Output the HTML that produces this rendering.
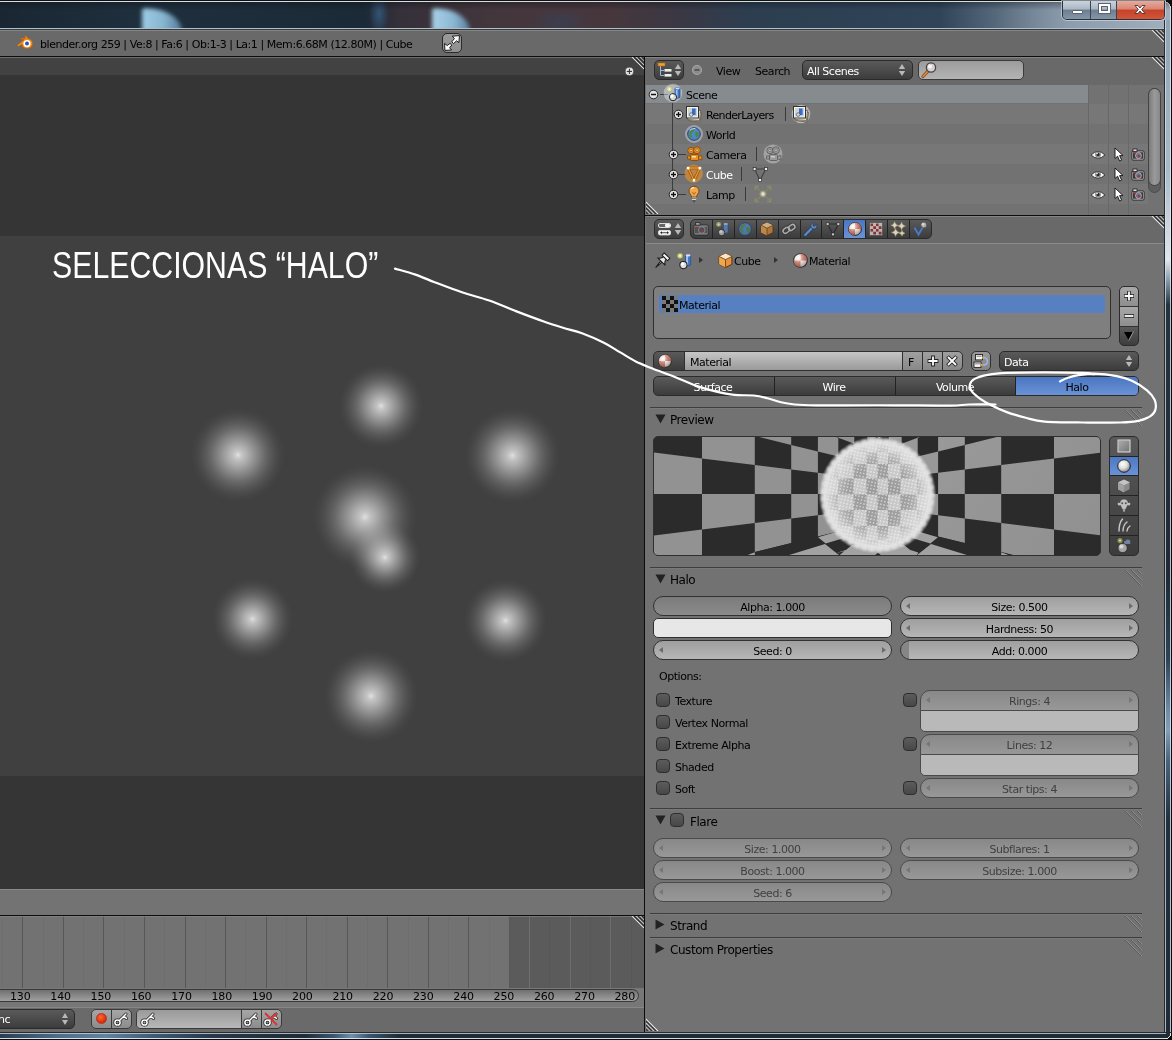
<!DOCTYPE html><html><head><meta charset="utf-8"><title>Blender</title><style>
*{margin:0;padding:0;box-sizing:border-box}
html,body{width:1172px;height:1040px;overflow:hidden;background:#727272}
body{position:relative;font-family:"DejaVu Sans","Liberation Sans",sans-serif;font-size:11px;color:#000;line-height:13px;letter-spacing:-0.45px}
.a{position:absolute}
.t{position:absolute;white-space:nowrap;line-height:13px;height:13px}
.w{color:#fff}
.hd{position:absolute;background:#6b6b6b}
.grip{position:absolute;width:13px;height:13px;overflow:hidden}
.btn{position:absolute;border:1px solid #2b2b2b;border-radius:4px}
.dark{background:linear-gradient(#5a5a5a,#3c3c3c)}
.num{position:absolute;border:1px solid #323232;border-radius:10px;background:linear-gradient(#9f9f9f,#b6b6b6);height:20px;text-align:center;line-height:21px;white-space:nowrap;overflow:hidden}
.num.dis{background:linear-gradient(#888,#989898);color:#404040;border-color:#4a4a4a}
.cb{position:absolute;width:14px;height:14px;border:1px solid #2e2e2e;border-radius:4px;background:linear-gradient(#5c5c5c,#474747)}
.sep{position:absolute;height:1px;background:#3e3e3e;left:650px;width:492px}
.sep2{position:absolute;height:1px;background:#808080;left:650px;width:492px}
.ar{position:absolute;width:0;height:0;border:3px solid transparent}
</style></head><body><div id="root" style="position:absolute;left:0;top:0;width:1172px;height:1040px;will-change:transform"><div class="a" style="left:0;top:0;width:1172px;height:29px;overflow:hidden;background:
radial-gradient(ellipse 10px 22px at 379px 14px,rgba(52,88,124,.9) 0,rgba(52,88,124,0) 100%),
radial-gradient(ellipse 30px 14px at 560px 22px,rgba(50,70,100,.5) 0,rgba(50,70,100,0) 100%),
linear-gradient(90deg,#1a2733 0,#1f2f3d 12%,#1b2a37 31%,#35303a 34%,#43363c 42%,#47373c 52%,#3a3844 58%,#2c3e50 64%,#31465a 85%,#55697d 92%,#3a4d61 100%)">
<div class="a" style="left:142px;top:8px;width:40px;height:24px;background:linear-gradient(90deg,#9fcde6 0,#86b3ce 55%,#54799a 100%);border-radius:3px 38px 0 0/3px 24px 0 0;filter:blur(2.2px)"></div>
<div class="a" style="left:432px;top:8px;width:38px;height:24px;background:linear-gradient(90deg,#a8d2e8 0,#8db8d2 55%,#5a7f9e 100%);border-radius:3px 36px 0 0/3px 24px 0 0;filter:blur(2.2px)"></div>
</div><div class="a" style="left:940px;top:2px;width:232px;height:26px;background:linear-gradient(90deg,rgba(150,166,182,0),rgba(146,162,178,.55) 35%,rgba(150,166,182,.85) 55%,rgba(168,180,193,.95))"></div><div class="a" style="left:0;top:0;width:1172px;height:1px;background:#111"></div><div class="a" style="left:1164px;top:0;width:8px;height:8px;background:radial-gradient(circle at 0 100%,rgba(0,0,0,0) 0,rgba(0,0,0,0) 5.6px,#dfe6ec 5.8px,#dfe6ec 6.6px,#0d0d0d 6.9px)"></div><div class="a" style="left:0;top:1px;width:1165px;height:1px;background:#d8dde2"></div><div class="a" style="left:0;top:2px;width:1172px;height:8px;background:linear-gradient(rgba(10,15,20,.35),rgba(10,15,20,0))"></div><div class="a" style="left:0;top:28px;width:1165px;height:1px;background:#aebfce"></div><div class="a" style="left:1164px;top:20px;width:8px;height:1020px;background:linear-gradient(#8fa3b6 0,#a9b9c8 150px,#dfe6ec 240px,#8194a8 262px,#26343f 285px,#1f2c38 560px,#2d4458 640px,#6d8ca8 690px,#7f9fba 710px,#4a6580 740px,#223040 800px,#1f2c38 100%)"></div><div class="a" style="left:1164px;top:20px;width:1px;height:1012px;background:#2b2b2b"></div><div class="a" style="left:1165px;top:20px;width:1px;height:1013px;background:rgba(215,225,235,.75)"></div><div class="a" style="left:1170px;top:6px;width:1px;height:1028px;background:rgba(225,232,240,.8)"></div><div class="a" style="left:1171px;top:6px;width:1px;height:1034px;background:#0d0d0d"></div><div class="a" style="left:0;top:1032px;width:1172px;height:8px;background:linear-gradient(90deg,#2a3d50 0,#4d6d8a 5%,#5f83a2 9%,#3f5b75 13%,#26384a 18%,#1f2c38 26%,#3a566f 28.5%,#6f90ad 30%,#3a566f 31.5%,#1f2c38 34%,#1f2c38 100%)"></div><div class="a" style="left:0;top:1032px;width:1165px;height:1px;background:#2b2b2b"></div><div class="a" style="left:0;top:1033px;width:1166px;height:1px;background:rgba(190,203,216,.85)"></div><div class="a" style="left:0;top:1038px;width:1169px;height:1px;background:rgba(232,238,244,.9)"></div><div class="a" style="left:0;top:1039px;width:1172px;height:1px;background:#0d0d0d"></div><div class="a" style="left:1165px;top:1033px;width:7px;height:7px;background:radial-gradient(circle at 0 0,rgba(0,0,0,0) 0,rgba(0,0,0,0) 5.2px,#e4eaf0 5.3px,#e4eaf0 6.1px,#0d0d0d 6.3px)"></div><div class="a" style="left:1062px;top:1px;width:103px;height:19px;border:1px solid #2a3138;border-top:none;border-radius:0 0 5px 5px;overflow:hidden;box-shadow:0 0 0 1px rgba(220,230,240,.55)">
<div class="a" style="left:0;top:0;width:28px;height:18px;background:linear-gradient(#c9d3dc 0,#aab7c4 45%,#6d7e90 50%,#8496a8 100%);border-right:1px solid #3a4450"></div>
<div class="a" style="left:28px;top:0;width:26px;height:18px;background:linear-gradient(#c9d3dc 0,#aab7c4 45%,#6d7e90 50%,#8496a8 100%);border-right:1px solid #3a4450"></div>
<div class="a" style="left:54px;top:0;width:48px;height:18px;background:linear-gradient(#e7aa9c 0,#d88572 45%,#c4432a 50%,#d4553a 100%)"></div>
<div class="a" style="left:9px;top:9px;width:11px;height:4px;background:#fff;border:1px solid #5a6470;border-radius:1px"></div>
<div class="a" style="left:36px;top:3px;width:11px;height:9px;border:2px solid #fff;outline:1px solid #5a6470;background:transparent"><div style="position:absolute;left:0;top:0;right:0;bottom:0;border:1px solid #5a6470"></div></div>
<svg class="a" style="left:70px;top:2px" width="14" height="13" viewBox="0 0 14 13"><path d="M2 2.5L5 2.5L7 5L9 2.5L12 2.5L8.7 6.5L12 10.5L9 10.5L7 8L5 10.5L2 10.5L5.3 6.5Z" fill="#fff" stroke="#5a3a3a" stroke-width="1"/></svg>
</div><div class="a" style="left:0;top:29px;width:1164px;height:27px;background:#696969;border-top:1px solid #3a3a3a"></div><div class="a" style="left:0;top:30px;width:1164px;height:1px;background:#858585"></div><div class="a" style="left:0;top:56px;width:1164px;height:1px;background:#0c0c0c"></div><svg class="a" style="left:16px;top:35px" width="18" height="15" viewBox="0 0 18 15">
<path d="M1.2 10.2L8.2 4.6L5 4.6L5 3.2L9.6 3.2L8.4 1.6L9.6 0.8L12.4 3.6C15.4 4.4 17 6.6 16.6 9.2C16.2 12 13.6 13.8 10.6 13.6C8 13.4 6 11.8 5.8 9.6L2.4 11.6Z" fill="#f08a1c" stroke="#b85c00" stroke-width=".6"/>
<circle cx="11" cy="8.6" r="3.6" fill="#fff"/><circle cx="11" cy="8.6" r="2" fill="#2f55b0"/></svg><div class="t " style="left:40px;top:38px;letter-spacing:-0.45px;">blender.org 259 | Ve:8 | Fa:6 | Ob:1-3 | La:1 | Mem:6.68M (12.80M) | Cube</div><div class="btn" style="left:442px;top:33px;width:20px;height:20px;background:linear-gradient(#9a9a9a,#909090);border-color:#2a2a2a;border-radius:5px"></div>
<svg class="a" style="left:442px;top:33px" width="20" height="20" viewBox="0 0 20 20"><g fill="#fff" stroke="#1c1c1c" stroke-width="1" stroke-linejoin="round"><path d="M10.2 3.2L17.4 2.6L16.9 9.6L14.6 7.8L11.6 10.6L9.8 8.8L12.4 5.6Z"/><path d="M2.6 10.4L2.9 17.4L9.6 17L7.6 14.8L9.8 12L8 10.4L5.2 12.6Z"/></g></svg><svg class="a" style="left:1151px;top:30px;" width="13" height="13" viewBox="0 0 13 13"><g stroke-width="1.05"><path d="M1 0L13 12" stroke="#ededed"/><path d="M5 0L13 8" stroke="#d8d8d8" opacity=".9"/><path d="M9 0L13 4" stroke="#c8c8c8" opacity=".8"/><path d="M3 0L13 10M7 0L13 6M11 0L13 2" stroke="#2c2c2c"/></g></svg><div class="a" style="left:0;top:57px;width:644px;height:832px;background:#353535"></div><div class="a" style="left:0;top:57px;width:644px;height:1px;background:#6e6e6e"></div><div class="a" style="left:0;top:58px;width:644px;height:17px;background:#424242"></div><div class="a" style="left:0;top:236px;width:644px;height:540px;background:#404040"></div><svg class="a" style="left:631px;top:57px;" width="13" height="13" viewBox="0 0 13 13"><g stroke-width="1.05"><path d="M1 0L13 12" stroke="#ededed"/><path d="M5 0L13 8" stroke="#d8d8d8" opacity=".9"/><path d="M9 0L13 4" stroke="#c8c8c8" opacity=".8"/><path d="M3 0L13 10M7 0L13 6M11 0L13 2" stroke="#2c2c2c"/></g></svg><svg class="a" style="left:624px;top:66px" width="11" height="11" viewBox="0 0 11 11"><circle cx="5.4" cy="5.4" r="4.1" fill="#e4e4e4" stroke="#3a3a3a" stroke-width=".5"/><path d="M5.4 2.8V8M2.8 5.4H8" stroke="#2a2a2a" stroke-width="1"/></svg><div class="a" style="left:339.2px;top:363.5px;width:84.3px;height:84.3px;border-radius:50%;background:radial-gradient(circle closest-side,rgba(255,255,255,.86) 0,rgba(255,255,255,.78) 3%,rgba(255,255,255,.68) 10%,rgba(255,255,255,.56) 22%,rgba(255,255,255,.44) 34%,rgba(255,255,255,.335) 45%,rgba(255,255,255,.22) 57%,rgba(255,255,255,.136) 68%,rgba(255,255,255,.065) 80%,rgba(255,255,255,.022) 90%,rgba(255,255,255,0) 100%)"></div><div class="a" style="left:190.7px;top:407.5px;width:94.2px;height:94.2px;border-radius:50%;background:radial-gradient(circle closest-side,rgba(255,255,255,.86) 0,rgba(255,255,255,.78) 3%,rgba(255,255,255,.68) 10%,rgba(255,255,255,.56) 22%,rgba(255,255,255,.44) 34%,rgba(255,255,255,.335) 45%,rgba(255,255,255,.22) 57%,rgba(255,255,255,.136) 68%,rgba(255,255,255,.065) 80%,rgba(255,255,255,.022) 90%,rgba(255,255,255,0) 100%)"></div><div class="a" style="left:465.4px;top:408.4px;width:94.2px;height:94.2px;border-radius:50%;background:radial-gradient(circle closest-side,rgba(255,255,255,.86) 0,rgba(255,255,255,.78) 3%,rgba(255,255,255,.68) 10%,rgba(255,255,255,.56) 22%,rgba(255,255,255,.44) 34%,rgba(255,255,255,.335) 45%,rgba(255,255,255,.22) 57%,rgba(255,255,255,.136) 68%,rgba(255,255,255,.065) 80%,rgba(255,255,255,.022) 90%,rgba(255,255,255,0) 100%)"></div><div class="a" style="left:312.9px;top:465.2px;width:104.2px;height:104.2px;border-radius:50%;background:radial-gradient(circle closest-side,rgba(255,255,255,.86) 0,rgba(255,255,255,.78) 3%,rgba(255,255,255,.68) 10%,rgba(255,255,255,.56) 22%,rgba(255,255,255,.44) 34%,rgba(255,255,255,.335) 45%,rgba(255,255,255,.22) 57%,rgba(255,255,255,.136) 68%,rgba(255,255,255,.065) 80%,rgba(255,255,255,.022) 90%,rgba(255,255,255,0) 100%)"></div><div class="a" style="left:348.9px;top:521.6px;width:71.9px;height:71.9px;border-radius:50%;background:radial-gradient(circle closest-side,rgba(255,255,255,.86) 0,rgba(255,255,255,.78) 3%,rgba(255,255,255,.68) 10%,rgba(255,255,255,.56) 22%,rgba(255,255,255,.44) 34%,rgba(255,255,255,.335) 45%,rgba(255,255,255,.22) 57%,rgba(255,255,255,.136) 68%,rgba(255,255,255,.065) 80%,rgba(255,255,255,.022) 90%,rgba(255,255,255,0) 100%)"></div><div class="a" style="left:211.6px;top:578.1px;width:81.8px;height:81.8px;border-radius:50%;background:radial-gradient(circle closest-side,rgba(255,255,255,.86) 0,rgba(255,255,255,.78) 3%,rgba(255,255,255,.68) 10%,rgba(255,255,255,.56) 22%,rgba(255,255,255,.44) 34%,rgba(255,255,255,.335) 45%,rgba(255,255,255,.22) 57%,rgba(255,255,255,.136) 68%,rgba(255,255,255,.065) 80%,rgba(255,255,255,.022) 90%,rgba(255,255,255,0) 100%)"></div><div class="a" style="left:464.0px;top:578.8px;width:83.1px;height:83.1px;border-radius:50%;background:radial-gradient(circle closest-side,rgba(255,255,255,.86) 0,rgba(255,255,255,.78) 3%,rgba(255,255,255,.68) 10%,rgba(255,255,255,.56) 22%,rgba(255,255,255,.44) 34%,rgba(255,255,255,.335) 45%,rgba(255,255,255,.22) 57%,rgba(255,255,255,.136) 68%,rgba(255,255,255,.065) 80%,rgba(255,255,255,.022) 90%,rgba(255,255,255,0) 100%)"></div><div class="a" style="left:323.9px;top:649.3px;width:94.2px;height:94.2px;border-radius:50%;background:radial-gradient(circle closest-side,rgba(255,255,255,.86) 0,rgba(255,255,255,.78) 3%,rgba(255,255,255,.68) 10%,rgba(255,255,255,.56) 22%,rgba(255,255,255,.44) 34%,rgba(255,255,255,.335) 45%,rgba(255,255,255,.22) 57%,rgba(255,255,255,.136) 68%,rgba(255,255,255,.065) 80%,rgba(255,255,255,.022) 90%,rgba(255,255,255,0) 100%)"></div><div class="a" id="sel" style="left:51.7px;top:241.1px;font-family:'Liberation Sans',sans-serif;font-size:36.3px;line-height:50px;color:#fff;white-space:nowrap;letter-spacing:0;transform-origin:0 0;transform:scaleX(.834)">SELECCIONAS “HALO”</div><div class="a" style="left:0;top:889px;width:644px;height:27px;background:#737373"></div><div class="a" style="left:0;top:889px;width:644px;height:1px;background:#8a8a8a"></div><div class="a" style="left:0;top:915px;width:644px;height:1px;background:#0c0c0c"></div><div class="a" style="left:0;top:916px;width:644px;height:73px;background:#727272;overflow:hidden" id="tl"><div class="a" style="left:509px;top:0;width:135px;height:73px;background:#5b5b5b"></div><div class="a" style="left:22.3px;top:0;width:1px;height:73px;background:#575757"></div><div class="a" style="left:2.0px;top:0;width:1px;height:73px;background:#6e6e6e"></div><div class="a" style="left:62.8px;top:0;width:1px;height:73px;background:#575757"></div><div class="a" style="left:42.6px;top:0;width:1px;height:73px;background:#6e6e6e"></div><div class="a" style="left:103.4px;top:0;width:1px;height:73px;background:#575757"></div><div class="a" style="left:83.1px;top:0;width:1px;height:73px;background:#6e6e6e"></div><div class="a" style="left:143.9px;top:0;width:1px;height:73px;background:#575757"></div><div class="a" style="left:123.7px;top:0;width:1px;height:73px;background:#6e6e6e"></div><div class="a" style="left:184.5px;top:0;width:1px;height:73px;background:#575757"></div><div class="a" style="left:164.2px;top:0;width:1px;height:73px;background:#6e6e6e"></div><div class="a" style="left:225.1px;top:0;width:1px;height:73px;background:#575757"></div><div class="a" style="left:204.8px;top:0;width:1px;height:73px;background:#6e6e6e"></div><div class="a" style="left:265.6px;top:0;width:1px;height:73px;background:#575757"></div><div class="a" style="left:245.3px;top:0;width:1px;height:73px;background:#6e6e6e"></div><div class="a" style="left:306.1px;top:0;width:1px;height:73px;background:#575757"></div><div class="a" style="left:285.9px;top:0;width:1px;height:73px;background:#6e6e6e"></div><div class="a" style="left:346.7px;top:0;width:1px;height:73px;background:#575757"></div><div class="a" style="left:326.4px;top:0;width:1px;height:73px;background:#6e6e6e"></div><div class="a" style="left:387.2px;top:0;width:1px;height:73px;background:#575757"></div><div class="a" style="left:367.0px;top:0;width:1px;height:73px;background:#6e6e6e"></div><div class="a" style="left:427.8px;top:0;width:1px;height:73px;background:#575757"></div><div class="a" style="left:407.5px;top:0;width:1px;height:73px;background:#6e6e6e"></div><div class="a" style="left:468.3px;top:0;width:1px;height:73px;background:#575757"></div><div class="a" style="left:448.1px;top:0;width:1px;height:73px;background:#6e6e6e"></div><div class="a" style="left:508.9px;top:0;width:1px;height:73px;background:#575757"></div><div class="a" style="left:488.6px;top:0;width:1px;height:73px;background:#6e6e6e"></div><div class="a" style="left:549.4px;top:0;width:1px;height:73px;background:#575757"></div><div class="a" style="left:529.2px;top:0;width:1px;height:73px;background:#6e6e6e"></div><div class="a" style="left:590.0px;top:0;width:1px;height:73px;background:#575757"></div><div class="a" style="left:569.7px;top:0;width:1px;height:73px;background:#6e6e6e"></div><div class="a" style="left:630.5px;top:0;width:1px;height:73px;background:#575757"></div><div class="a" style="left:610.3px;top:0;width:1px;height:73px;background:#6e6e6e"></div><div class="a" style="left:671.1px;top:0;width:1px;height:73px;background:#575757"></div><div class="a" style="left:650.8px;top:0;width:1px;height:73px;background:#6e6e6e"></div></div><div class="a" style="left:0;top:916px;width:644px;height:1px;background:#8a8a8a;opacity:.6"></div><svg class="a" style="left:631px;top:916px;" width="13" height="13" viewBox="0 0 13 13"><g stroke-width="1.05"><path d="M1 0L13 12" stroke="#ededed"/><path d="M5 0L13 8" stroke="#d8d8d8" opacity=".9"/><path d="M9 0L13 4" stroke="#c8c8c8" opacity=".8"/><path d="M3 0L13 10M7 0L13 6M11 0L13 2" stroke="#2c2c2c"/></g></svg><div class="a" style="left:0;top:988px;width:644px;height:20px;background:#777"></div><div class="a" style="left:-20px;top:989px;width:659px;height:13px;border:1px solid #3a3a3a;border-radius:7px;background:linear-gradient(#707070,#a0a0a0)"></div><div class="t" style="left:5.3px;top:990px;width:30px;text-align:center;font-size:11px;letter-spacing:-.15px">130</div><div class="t" style="left:45.6px;top:990px;width:30px;text-align:center;font-size:11px;letter-spacing:-.15px">140</div><div class="t" style="left:85.9px;top:990px;width:30px;text-align:center;font-size:11px;letter-spacing:-.15px">150</div><div class="t" style="left:126.2px;top:990px;width:30px;text-align:center;font-size:11px;letter-spacing:-.15px">160</div><div class="t" style="left:166.5px;top:990px;width:30px;text-align:center;font-size:11px;letter-spacing:-.15px">170</div><div class="t" style="left:206.8px;top:990px;width:30px;text-align:center;font-size:11px;letter-spacing:-.15px">180</div><div class="t" style="left:247.1px;top:990px;width:30px;text-align:center;font-size:11px;letter-spacing:-.15px">190</div><div class="t" style="left:287.4px;top:990px;width:30px;text-align:center;font-size:11px;letter-spacing:-.15px">200</div><div class="t" style="left:327.7px;top:990px;width:30px;text-align:center;font-size:11px;letter-spacing:-.15px">210</div><div class="t" style="left:368.0px;top:990px;width:30px;text-align:center;font-size:11px;letter-spacing:-.15px">220</div><div class="t" style="left:408.3px;top:990px;width:30px;text-align:center;font-size:11px;letter-spacing:-.15px">230</div><div class="t" style="left:448.6px;top:990px;width:30px;text-align:center;font-size:11px;letter-spacing:-.15px">240</div><div class="t" style="left:488.9px;top:990px;width:30px;text-align:center;font-size:11px;letter-spacing:-.15px">250</div><div class="t" style="left:529.2px;top:990px;width:30px;text-align:center;font-size:11px;letter-spacing:-.15px">260</div><div class="t" style="left:569.5px;top:990px;width:30px;text-align:center;font-size:11px;letter-spacing:-.15px">270</div><div class="t" style="left:609.8px;top:990px;width:30px;text-align:center;font-size:11px;letter-spacing:-.15px">280</div><div class="a" style="left:0;top:1007px;width:644px;height:25px;background:#6a6a6a;border-top:1px solid #878787"></div><div class="btn dark" style="left:-10px;top:1009px;width:85px;height:20px;border-radius:5px"></div><div class="t w" style="left:-2px;top:1013px;letter-spacing:-0.45px;">nc</div><svg class="a" style="left:61px;top:1012px" width="8" height="14" viewBox="0 0 8 14"><path d="M4 1L7 6H1ZM4 13L1 8H7Z" fill="#b8b8b8"/></svg><div class="btn" style="left:91px;top:1009px;width:21px;height:20px;background:linear-gradient(#a6a6a6,#8c8c8c);border-color:#3a3a3a;border-radius:5px 0 0 5px"></div><div class="btn" style="left:111px;top:1009px;width:21px;height:20px;background:linear-gradient(#a6a6a6,#8c8c8c);border-color:#3a3a3a;border-radius:0 5px 5px 0"></div><div class="a" style="left:96px;top:1013px;width:11px;height:11px;border-radius:50%;background:radial-gradient(circle at 40% 35%,#ff6a30,#e02800 70%);border:1px solid #a33"></div><div class="btn" style="left:136px;top:1009px;width:106px;height:20px;background:linear-gradient(#a6a6a6,#8c8c8c);border-color:#3a3a3a;border-radius:5px 0 0 5px"></div><div class="a" style="left:137px;top:1010px;width:104px;height:18px;background:linear-gradient(#9a9a9a,#b8b8b8);border-radius:4px 0 0 4px"></div><div class="btn" style="left:241px;top:1009px;width:21px;height:20px;background:linear-gradient(#a6a6a6,#8c8c8c);border-color:#3a3a3a;border-radius:0"></div><div class="btn" style="left:261px;top:1009px;width:21px;height:20px;background:linear-gradient(#a6a6a6,#8c8c8c);border-color:#3a3a3a;border-radius:0 5px 5px 0"></div><svg class="a" style="left:113px;top:1011px" width="16" height="16" viewBox="0 0 16 16"><g fill="none" stroke="#222" stroke-width="3" stroke-linecap="round"><circle cx="4.5" cy="11.5" r="2.6"/><path d="M6.5 9.5L13 3M11 5L13.5 7.5"/></g><g fill="none" stroke="#fff" stroke-width="1.5" stroke-linecap="round"><circle cx="4.5" cy="11.5" r="2.6"/><path d="M6.5 9.5L13 3M11 5L13.5 7.5"/></g></svg><svg class="a" style="left:140px;top:1011px" width="16" height="16" viewBox="0 0 16 16"><g fill="none" stroke="#222" stroke-width="3" stroke-linecap="round"><circle cx="4.5" cy="11.5" r="2.6"/><path d="M6.5 9.5L13 3M11 5L13.5 7.5"/></g><g fill="none" stroke="#fff" stroke-width="1.5" stroke-linecap="round"><circle cx="4.5" cy="11.5" r="2.6"/><path d="M6.5 9.5L13 3M11 5L13.5 7.5"/></g></svg><svg class="a" style="left:243px;top:1011px" width="16" height="16" viewBox="0 0 16 16"><g fill="none" stroke="#222" stroke-width="3" stroke-linecap="round"><circle cx="4.5" cy="11.5" r="2.6"/><path d="M6.5 9.5L13 3M11 5L13.5 7.5"/></g><g fill="none" stroke="#fff" stroke-width="1.5" stroke-linecap="round"><circle cx="4.5" cy="11.5" r="2.6"/><path d="M6.5 9.5L13 3M11 5L13.5 7.5"/></g></svg><svg class="a" style="left:263px;top:1011px" width="16" height="16" viewBox="0 0 16 16"><g fill="none" stroke="#222" stroke-width="3" stroke-linecap="round"><circle cx="4.5" cy="11.5" r="2.6"/><path d="M6.5 9.5L13 3M11 5L13.5 7.5"/></g><g fill="none" stroke="#fff" stroke-width="1.5" stroke-linecap="round"><circle cx="4.5" cy="11.5" r="2.6"/><path d="M6.5 9.5L13 3M11 5L13.5 7.5"/></g></svg><svg class="a" style="left:263px;top:1011px" width="16" height="16" viewBox="0 0 16 16"><path d="M2 2L14 14M14 2L8 8" stroke="#e03030" stroke-width="1.8" fill="none"/></svg><svg class="a" style="left:646px;top:1018px;transform:scale(-1,-1);" width="13" height="13" viewBox="0 0 13 13"><g stroke-width="1.05"><path d="M1 0L13 12" stroke="#ededed"/><path d="M5 0L13 8" stroke="#d8d8d8" opacity=".9"/><path d="M9 0L13 4" stroke="#c8c8c8" opacity=".8"/><path d="M3 0L13 10M7 0L13 6M11 0L13 2" stroke="#2c2c2c"/></g></svg><div class="a" style="left:644px;top:57px;width:1px;height:975px;background:#0c0c0c"></div><div class="a" style="left:645px;top:57px;width:519px;height:28px;background:#696969;border-top:1px solid #858585"></div><svg class="a" style="left:1151px;top:57px;" width="13" height="13" viewBox="0 0 13 13"><g stroke-width="1.05"><path d="M1 0L13 12" stroke="#ededed"/><path d="M5 0L13 8" stroke="#d8d8d8" opacity=".9"/><path d="M9 0L13 4" stroke="#c8c8c8" opacity=".8"/><path d="M3 0L13 10M7 0L13 6M11 0L13 2" stroke="#2c2c2c"/></g></svg><div class="btn dark" style="left:654px;top:60px;width:30px;height:20px;border-radius:5px"></div><svg class="a" style="left:657px;top:62px" width="16" height="16" viewBox="0 0 16 16"><path d="M3.5 4V13.5H7M3.5 8.5H7" fill="none" stroke="#9db8d8" stroke-width="1"/><rect x="1" y="1" width="7" height="3" fill="#f0a030" stroke="#b06a00" stroke-width=".5"/><rect x="7.5" y="7" width="7" height="2.6" fill="#eee"/><rect x="7.5" y="12" width="7" height="2.6" fill="#eee"/></svg><svg class="a" style="left:674px;top:63px" width="8" height="14" viewBox="0 0 8 14"><path d="M4 1L7.2 6H.8ZM4 13L.8 8H7.2Z" fill="#b8b8b8"/></svg><svg class="a" style="left:691px;top:64px" width="12" height="12" viewBox="0 0 12 12"><circle cx="6" cy="6" r="4.5" fill="#8c8c8c" stroke="#a4a4a4" stroke-width="1.1"/><path d="M3.5 6H8.5" stroke="#484848" stroke-width="1.5"/></svg><div class="t " style="left:716px;top:65px;letter-spacing:-0.45px;">View</div><div class="t " style="left:755px;top:65px;letter-spacing:-0.45px;">Search</div><div class="btn dark" style="left:802px;top:60px;width:111px;height:20px;border-radius:5px"></div><div class="t w" style="left:807px;top:65px;letter-spacing:-0.45px;">All Scenes</div><svg class="a" style="left:898px;top:63px" width="8" height="14" viewBox="0 0 8 14"><path d="M4 1L7.2 6H.8ZM4 13L.8 8H7.2Z" fill="#b8b8b8"/></svg><div class="btn" style="left:918px;top:60px;width:106px;height:20px;border-radius:5px;background:linear-gradient(#9c9c9c,#b4b4b4);border-color:#3a3a3a"></div><svg class="a" style="left:920px;top:61px" width="18" height="18" viewBox="0 0 18 18"><path d="M3 15.5L8 10" stroke="#8a4a18" stroke-width="3.2" stroke-linecap="round"/><path d="M3 15.5L8 10" stroke="#e08a40" stroke-width="1.6" stroke-linecap="round"/><circle cx="11" cy="6.5" r="4.6" fill="#d8d0d4" stroke="#444" stroke-width="1.3"/><circle cx="10" cy="5.5" r="2" fill="#fff" opacity=".8"/></svg><div class="a" style="left:646px;top:85px;width:518px;height:130px;background:#727272"></div><div class="a" style="left:646px;top:104px;width:502px;height:20px;background:#777"></div><div class="a" style="left:646px;top:144px;width:502px;height:20px;background:#777"></div><div class="a" style="left:646px;top:184px;width:502px;height:20px;background:#777"></div><div class="a" style="left:646px;top:85px;width:442px;height:18px;background:#868b90"></div><div class="a" style="left:1088px;top:85px;width:1px;height:130px;background:#686868"></div><div class="a" style="left:1108px;top:85px;width:1px;height:130px;background:#686868"></div><div class="a" style="left:1128px;top:85px;width:1px;height:130px;background:#686868"></div><div class="a" style="left:1148px;top:88px;width:13px;height:105px;border-radius:7px;background:#5e5e5e;border:1px solid #4c4c4c"></div><div class="a" style="left:1148px;top:88px;width:13px;height:98px;border-radius:7px;background:linear-gradient(90deg,#7a7a7a,#9a9a9a 50%,#888);border:1px solid #444"></div><div class="a" style="left:645px;top:215px;width:519px;height:1px;background:#0c0c0c"></div><svg class="a" style="left:646px;top:201px;transform:scale(-1,-1);" width="13" height="13" viewBox="0 0 13 13"><g stroke-width="1.05"><path d="M1 0L13 12" stroke="#ededed"/><path d="M5 0L13 8" stroke="#d8d8d8" opacity=".9"/><path d="M9 0L13 4" stroke="#c8c8c8" opacity=".8"/><path d="M3 0L13 10M7 0L13 6M11 0L13 2" stroke="#2c2c2c"/></g></svg><div class="a" style="left:672px;top:103px;width:1px;height:91px;background:#3c3c3c"></div><div class="a" style="left:660px;top:94px;width:8px;height:1px;background:#3c3c3c"></div><div class="a" style="left:672px;top:154px;width:14px;height:1px;background:#3c3c3c"></div><div class="a" style="left:672px;top:174px;width:14px;height:1px;background:#3c3c3c"></div><div class="a" style="left:672px;top:194px;width:14px;height:1px;background:#3c3c3c"></div><svg class="a" style="left:648px;top:89px" width="11" height="11" viewBox="0 0 11 11"><circle cx="5.5" cy="5.5" r="4.3" fill="#e6e6e6" stroke="#222" stroke-width="1"/><path d="M3 5.5H8" stroke="#111" stroke-width="1.5"/></svg><svg class="a" style="left:673px;top:109px" width="11" height="11" viewBox="0 0 11 11"><circle cx="5.5" cy="5.5" r="4.3" fill="#e6e6e6" stroke="#222" stroke-width="1"/><path d="M5.5 3V8M3 5.5H8" stroke="#111" stroke-width="1.3"/></svg><svg class="a" style="left:668px;top:149px" width="11" height="11" viewBox="0 0 11 11"><circle cx="5.5" cy="5.5" r="4.3" fill="#e6e6e6" stroke="#222" stroke-width="1"/><path d="M5.5 3V8M3 5.5H8" stroke="#111" stroke-width="1.3"/></svg><svg class="a" style="left:668px;top:169px" width="11" height="11" viewBox="0 0 11 11"><circle cx="5.5" cy="5.5" r="4.3" fill="#e6e6e6" stroke="#222" stroke-width="1"/><path d="M5.5 3V8M3 5.5H8" stroke="#111" stroke-width="1.3"/></svg><svg class="a" style="left:668px;top:189px" width="11" height="11" viewBox="0 0 11 11"><circle cx="5.5" cy="5.5" r="4.3" fill="#e6e6e6" stroke="#222" stroke-width="1"/><path d="M5.5 3V8M3 5.5H8" stroke="#111" stroke-width="1.3"/></svg><div class="t " style="left:686px;top:89px;letter-spacing:-0.45px;">Scene</div><div class="t " style="left:706px;top:109px;letter-spacing:-0.67px;">RenderLayers</div><div class="t " style="left:706px;top:129px;letter-spacing:-0.45px;">World</div><div class="t " style="left:706px;top:149px;letter-spacing:-0.45px;">Camera</div><div class="t w" style="left:706px;top:169px;letter-spacing:-0.45px;">Cube</div><div class="t " style="left:706px;top:189px;letter-spacing:-0.45px;">Lamp</div><div class="a" style="left:785px;top:107px;width:1px;height:14px;background:#3a3a3a"></div><div class="a" style="left:756px;top:147px;width:1px;height:14px;background:#3a3a3a"></div><div class="a" style="left:741px;top:167px;width:1px;height:14px;background:#3a3a3a"></div><div class="a" style="left:745px;top:187px;width:1px;height:14px;background:#3a3a3a"></div><svg class="a" style="left:663px;top:83px" width="20" height="20" viewBox="0 0 20 20"><circle cx="10" cy="10" r="9.3" fill="#fff" opacity=".38"/>
<circle cx="6.4" cy="6.2" r="2.1" fill="#e8ee70" opacity=".85"/><circle cx="6.4" cy="6.2" r="1" fill="#fffbd0"/>
<path d="M12 5.5V14.5Q14.5 16 17 14.5V5.5Z" fill="#3f74c4"/><path d="M12.6 6V14.6Q13.6 15.2 14.6 15.2V6Z" fill="#9cc4f0"/><ellipse cx="14.5" cy="5.5" rx="2.5" ry="1.2" fill="#cfe2fa" stroke="#2a5296" stroke-width=".5"/><path d="M12 5.5V14.5Q14.5 16 17 14.5V5.5" fill="none" stroke="#24468a" stroke-width=".7"/>
<circle cx="10" cy="14.2" r="3.6" fill="#d8d8d8" stroke="#1c1c1c" stroke-width="1"/><circle cx="9" cy="13" r="1.7" fill="#fff"/></svg><svg class="a" style="left:684px;top:104px" width="20" height="20" viewBox="0 0 20 20">
<path d="M6 7L17.5 8.5L16 18L4.5 16.5Z" fill="#d8ceb0" stroke="#5a5648" stroke-width=".8"/>
<path d="M4.5 5.5L16.5 6.5L15.5 16.5L3.5 15.5Z" fill="#e8e2cc" stroke="#5a5648" stroke-width=".8"/>
<rect x="2.5" y="2.5" width="12" height="11.5" fill="#f4f4f4" stroke="#333" stroke-width="1"/>
<rect x="4" y="4" width="9" height="8.5" fill="#c4d4ea"/>
<rect x="8" y="4.5" width="3.6" height="6.5" fill="#3c6cc0"/><circle cx="7.2" cy="10.6" r="1.8" fill="#ddd" stroke="#333" stroke-width=".6"/><circle cx="5.2" cy="5.4" r="1.1" fill="#f0e060"/></svg><svg class="a" style="left:791px;top:104px" width="20" height="20" viewBox="0 0 20 20"><circle cx="10" cy="10" r="9.3" fill="#fff" opacity=".45"/>
<path d="M6 7L17.5 8.5L16 18L4.5 16.5Z" fill="#d8ceb0" stroke="#5a5648" stroke-width=".8"/>
<path d="M4.5 5.5L16.5 6.5L15.5 16.5L3.5 15.5Z" fill="#e8e2cc" stroke="#5a5648" stroke-width=".8"/>
<rect x="2.5" y="2.5" width="12" height="11.5" fill="#f4f4f4" stroke="#333" stroke-width="1"/>
<rect x="4" y="4" width="9" height="8.5" fill="#c4d4ea"/>
<rect x="8" y="4.5" width="3.6" height="6.5" fill="#3c6cc0"/><circle cx="7.2" cy="10.6" r="1.8" fill="#ddd" stroke="#333" stroke-width=".6"/><circle cx="5.2" cy="5.4" r="1.1" fill="#f0e060"/></svg><svg class="a" style="left:684px;top:124px" width="20" height="20" viewBox="0 0 20 20"><circle cx="10" cy="10" r="9" fill="#c8c8e0" opacity=".55"/><circle cx="10" cy="10" r="6.3" fill="#4f86c8" stroke="#27406a" stroke-width="1"/>
<path d="M6 7Q8 4.5 10.5 5.5Q9.5 8 7.5 9Q6.5 11 8.5 12.5Q8 14.5 6.5 13.5Q4.5 11 6 7Z" fill="#4c8a3c"/><path d="M12 8Q14.5 7.5 15 10Q14.5 13.5 12.5 14Q12 11.5 11 10.5Q11 8.5 12 8Z" fill="#4c8a3c"/><path d="M5.6 6.4Q8 4 11.4 4.6" stroke="#d8e8ff" stroke-width="1.1" fill="none" opacity=".8"/></svg><svg class="a" style="left:684px;top:144px" width="20" height="20" viewBox="0 0 20 20">
<circle cx="7" cy="6.6" r="3.2" fill="#e99024" stroke="#8a4a00" stroke-width=".9"/><circle cx="13" cy="6.2" r="3.4" fill="#e99024" stroke="#8a4a00" stroke-width=".9"/>
<circle cx="7" cy="6.6" r="1.2" fill="#ffd8a0" stroke="#8a4a00" stroke-width=".6"/><circle cx="13" cy="6.2" r="1.3" fill="#ffd8a0" stroke="#8a4a00" stroke-width=".6"/>
<rect x="6.5" y="10.5" width="8" height="6" rx="1" fill="#e99024" stroke="#8a4a00" stroke-width=".9"/><path d="M14.5 12.5L17.8 11.3V16L14.5 14.8Z" fill="#e99024" stroke="#8a4a00" stroke-width=".8"/><rect x="3.6" y="12" width="3" height="3" fill="#e99024" stroke="#8a4a00" stroke-width=".8"/><rect x="8" y="12" width="4" height="1.6" fill="#ffd8a0"/></svg><svg class="a" style="left:763px;top:144px" width="20" height="20" viewBox="0 0 20 20"><circle cx="10" cy="10" r="9.5" fill="#fff" opacity=".32"/>
<circle cx="7" cy="6.6" r="3.2" fill="#9a9a9a" stroke="#5e5e5e" stroke-width=".9"/><circle cx="13" cy="6.2" r="3.4" fill="#9a9a9a" stroke="#5e5e5e" stroke-width=".9"/>
<circle cx="7" cy="6.6" r="1.2" fill="#c8c8c8" stroke="#5e5e5e" stroke-width=".6"/><circle cx="13" cy="6.2" r="1.3" fill="#c8c8c8" stroke="#5e5e5e" stroke-width=".6"/>
<rect x="6.5" y="10.5" width="8" height="6" rx="1" fill="#9a9a9a" stroke="#5e5e5e" stroke-width=".9"/><path d="M14.5 12.5L17.8 11.3V16L14.5 14.8Z" fill="#9a9a9a" stroke="#5e5e5e" stroke-width=".8"/><rect x="3.6" y="12" width="3" height="3" fill="#9a9a9a" stroke="#5e5e5e" stroke-width=".8"/><rect x="8" y="12" width="4" height="1.6" fill="#c8c8c8"/></svg><svg class="a" style="left:684px;top:164px" width="20" height="20" viewBox="0 0 20 20"><circle cx="9.7" cy="9.6" r="9.2" fill="#e8922c" opacity=".62"/>
<path d="M4 4L16 4L10 16.5Z" fill="none" stroke="#8a4a00" stroke-width="2.6" stroke-linejoin="round"/><path d="M4 4L16 4L10 16.5Z" fill="none" stroke="#f09a30" stroke-width="1.4"/>
<rect x="2.8" y="2.8" width="2.6" height="2.6" fill="#fff"/><rect x="14.6" y="2.8" width="2.6" height="2.6" fill="#fff"/><rect x="8.7" y="15" width="2.6" height="2.6" fill="#fff"/></svg><svg class="a" style="left:750px;top:164px" width="20" height="20" viewBox="0 0 20 20"><path d="M4.5 5L16 5L10 16Z" fill="none" stroke="#404040" stroke-width="1.1"/>
<g fill="#f0f0f0" stroke="#333" stroke-width=".7"><rect x="3.2" y="3.6" width="2.8" height="2.8"/><rect x="14.6" y="3.6" width="2.8" height="2.8"/><rect x="8.6" y="14.6" width="2.8" height="2.8"/></g></svg><svg class="a" style="left:684px;top:184px" width="20" height="20" viewBox="0 0 20 20"><path d="M10 2.2C6.8 2.2 5 4.6 5 7C5 9.6 7.4 10.6 7.6 13H12.4C12.6 10.6 15 9.6 15 7C15 4.6 13.2 2.2 10 2.2Z" fill="#f0a850" stroke="#7a4200" stroke-width=".9"/>
<path d="M7.2 5.2Q8.2 3.6 10 3.6" stroke="#fff0d0" stroke-width="1.2" fill="none"/><path d="M8.4 8L10 10.5L11.6 8" stroke="#a85a00" stroke-width=".8" fill="none"/>
<rect x="7.6" y="13.2" width="4.8" height="1.3" fill="#e8e8e8" stroke="#555" stroke-width=".4"/><rect x="7.6" y="14.8" width="4.8" height="1.3" fill="#e8e8e8" stroke="#555" stroke-width=".4"/><path d="M8.2 16.4H11.8L10 18.4Z" fill="#444"/></svg><svg class="a" style="left:753px;top:184px" width="20" height="20" viewBox="0 0 20 20"><g fill="none" stroke="#8c8c62" stroke-width="1.6"><path d="M2.5 6V2.5H6M14 2.5H17.5V6M17.5 14V17.5H14M6 17.5H2.5V14"/><path d="M3.5 3.5L7 7M16.5 3.5L13 7M16.5 16.5L13 13M3.5 16.5L7 13" stroke-width="1"/></g><circle cx="10" cy="10" r="3.2" fill="#b8b8a0" stroke="#8c8c62" stroke-width="1"/><circle cx="10" cy="10" r="1.4" fill="#e4e4d8"/></svg><svg class="a" style="left:1090px;top:149px" width="16" height="12" viewBox="0 0 16 12"><path d="M1 6Q8 -1 15 6Q8 12.5 1 6Z" fill="#f2f2f2" stroke="#333" stroke-width=".9"/><circle cx="8" cy="5.6" r="2.9" fill="#8a8a8a"/><circle cx="8" cy="5.6" r="1.5" fill="#222"/><circle cx="7" cy="4.6" r=".8" fill="#fff"/></svg><svg class="a" style="left:1114px;top:147px" width="10" height="16" viewBox="0 0 10 16"><path d="M1 1V11.5L3.6 9.2L5.6 14L7.6 13.2L5.6 8.6H9Z" fill="#fff" stroke="#111" stroke-width=".9" stroke-linejoin="round"/></svg><svg class="a" style="left:1131px;top:148px" width="14" height="13" viewBox="0 0 14 13"><rect x="1" y="3" width="12" height="9" rx="1" fill="#e8e8e8" stroke="#222" stroke-width="1"/><rect x="2" y="1" width="4" height="2.4" fill="#ddd" stroke="#222" stroke-width=".8"/><rect x="2" y="4.2" width="10" height="6.6" fill="#3a3a3a"/><circle cx="7.4" cy="7.6" r="3" fill="#6a6f8a" stroke="#ccc" stroke-width=".7"/><circle cx="8" cy="8.2" r="1.3" fill="#b03030"/><rect x="2.4" y="4.4" width="1.6" height="1.4" fill="#e02020"/></svg><svg class="a" style="left:1090px;top:169px" width="16" height="12" viewBox="0 0 16 12"><path d="M1 6Q8 -1 15 6Q8 12.5 1 6Z" fill="#f2f2f2" stroke="#333" stroke-width=".9"/><circle cx="8" cy="5.6" r="2.9" fill="#8a8a8a"/><circle cx="8" cy="5.6" r="1.5" fill="#222"/><circle cx="7" cy="4.6" r=".8" fill="#fff"/></svg><svg class="a" style="left:1114px;top:167px" width="10" height="16" viewBox="0 0 10 16"><path d="M1 1V11.5L3.6 9.2L5.6 14L7.6 13.2L5.6 8.6H9Z" fill="#fff" stroke="#111" stroke-width=".9" stroke-linejoin="round"/></svg><svg class="a" style="left:1131px;top:168px" width="14" height="13" viewBox="0 0 14 13"><rect x="1" y="3" width="12" height="9" rx="1" fill="#e8e8e8" stroke="#222" stroke-width="1"/><rect x="2" y="1" width="4" height="2.4" fill="#ddd" stroke="#222" stroke-width=".8"/><rect x="2" y="4.2" width="10" height="6.6" fill="#3a3a3a"/><circle cx="7.4" cy="7.6" r="3" fill="#6a6f8a" stroke="#ccc" stroke-width=".7"/><circle cx="8" cy="8.2" r="1.3" fill="#b03030"/><rect x="2.4" y="4.4" width="1.6" height="1.4" fill="#e02020"/></svg><svg class="a" style="left:1090px;top:189px" width="16" height="12" viewBox="0 0 16 12"><path d="M1 6Q8 -1 15 6Q8 12.5 1 6Z" fill="#f2f2f2" stroke="#333" stroke-width=".9"/><circle cx="8" cy="5.6" r="2.9" fill="#8a8a8a"/><circle cx="8" cy="5.6" r="1.5" fill="#222"/><circle cx="7" cy="4.6" r=".8" fill="#fff"/></svg><svg class="a" style="left:1114px;top:187px" width="10" height="16" viewBox="0 0 10 16"><path d="M1 1V11.5L3.6 9.2L5.6 14L7.6 13.2L5.6 8.6H9Z" fill="#fff" stroke="#111" stroke-width=".9" stroke-linejoin="round"/></svg><svg class="a" style="left:1131px;top:188px" width="14" height="13" viewBox="0 0 14 13"><rect x="1" y="3" width="12" height="9" rx="1" fill="#e8e8e8" stroke="#222" stroke-width="1"/><rect x="2" y="1" width="4" height="2.4" fill="#ddd" stroke="#222" stroke-width=".8"/><rect x="2" y="4.2" width="10" height="6.6" fill="#3a3a3a"/><circle cx="7.4" cy="7.6" r="3" fill="#6a6f8a" stroke="#ccc" stroke-width=".7"/><circle cx="8" cy="8.2" r="1.3" fill="#b03030"/><rect x="2.4" y="4.4" width="1.6" height="1.4" fill="#e02020"/></svg><div class="a" style="left:646px;top:216px;width:518px;height:27px;background:#696969;border-top:1px solid #858585"></div><div class="a" style="left:646px;top:243px;width:518px;height:1px;background:#8a8a8a"></div><svg class="a" style="left:1151px;top:216px;" width="13" height="13" viewBox="0 0 13 13"><g stroke-width="1.05"><path d="M1 0L13 12" stroke="#ededed"/><path d="M5 0L13 8" stroke="#d8d8d8" opacity=".9"/><path d="M9 0L13 4" stroke="#c8c8c8" opacity=".8"/><path d="M3 0L13 10M7 0L13 6M11 0L13 2" stroke="#2c2c2c"/></g></svg><div class="btn dark" style="left:654px;top:219px;width:30px;height:20px;border-radius:5px"></div><svg class="a" style="left:657px;top:221px" width="16" height="16" viewBox="0 0 16 16"><rect x="1.5" y="2.5" width="12" height="4" rx="1.5" fill="#666" stroke="#ddd" stroke-width="1"/><rect x="8" y="3" width="5" height="3" rx="1" fill="#f4f4f4"/><rect x="1.5" y="9.5" width="12" height="4.4" rx="1.5" fill="#f4f4f4" stroke="#ddd" stroke-width="1"/><path d="M3 11.7L5 10.3V13.1ZM12 11.7L10 10.3V13.1Z" fill="#222"/><path d="M5 11.7H10" stroke="#222" stroke-width=".8"/></svg><svg class="a" style="left:674px;top:222px" width="8" height="14" viewBox="0 0 8 14"><path d="M4 1L7.2 6H.8ZM4 13L.8 8H7.2Z" fill="#b8b8b8"/></svg><div class="btn dark" style="left:690px;top:219px;width:242px;height:20px;border-radius:5px;overflow:hidden"><div class="a" style="left:153px;top:0;width:22px;height:18px;background:linear-gradient(#4a76c2,#6a93d6)"></div><div class="a" style="left:20.9px;top:0;width:1px;height:18px;background:#222"></div><div class="a" style="left:42.8px;top:0;width:1px;height:18px;background:#222"></div><div class="a" style="left:64.7px;top:0;width:1px;height:18px;background:#222"></div><div class="a" style="left:86.6px;top:0;width:1px;height:18px;background:#222"></div><div class="a" style="left:108.5px;top:0;width:1px;height:18px;background:#222"></div><div class="a" style="left:130.4px;top:0;width:1px;height:18px;background:#222"></div><div class="a" style="left:152.3px;top:0;width:1px;height:18px;background:#222"></div><div class="a" style="left:174.2px;top:0;width:1px;height:18px;background:#222"></div><div class="a" style="left:196.1px;top:0;width:1px;height:18px;background:#222"></div><div class="a" style="left:218.0px;top:0;width:1px;height:18px;background:#222"></div></div><svg class="a" style="left:693.2px;top:221px;opacity:.78;" width="16" height="16" viewBox="0 0 16 16"><rect x="1" y="4" width="14" height="10" rx="1" fill="#bbb" stroke="#222" stroke-width="1"/><rect x="2.5" y="1.6" width="4.5" height="2.6" fill="#aaa" stroke="#222" stroke-width=".8"/><rect x="2" y="5.5" width="12" height="7" fill="#555"/><circle cx="8.8" cy="9" r="3.3" fill="#4a4f6a" stroke="#aaa" stroke-width=".8"/><circle cx="9.4" cy="9.6" r="1.4" fill="#a03838"/><rect x="3" y="5.8" width="1.8" height="1.4" fill="#e02020"/></svg><svg class="a" style="left:715.1px;top:221px;opacity:.78;" width="16" height="16" viewBox="0 0 16 16"><circle cx="3.6" cy="3.4" r="2.4" fill="#dfe870" opacity=".7"/><circle cx="3.6" cy="3.4" r="1" fill="#fffbd0"/><path d="M8.5 3V11.5Q10.7 12.8 13 11.5V3Z" fill="#5a86c8" stroke="#2c4a80" stroke-width=".6"/><ellipse cx="10.75" cy="3" rx="2.25" ry="1" fill="#a8c4ea"/><circle cx="6.6" cy="11.6" r="3.2" fill="#bbb" stroke="#222" stroke-width=".9"/><circle cx="5.8" cy="10.6" r="1.4" fill="#eee"/></svg><svg class="a" style="left:737.0px;top:221px;opacity:.78;" width="16" height="16" viewBox="0 0 16 16"><circle cx="8" cy="8" r="6.3" fill="#4f86c8" stroke="#27406a" stroke-width="1"/><path d="M4 5Q6 2.5 8.5 3.5Q7.5 6 5.5 7Q4.5 9 6.5 10.5Q6 12.5 4.5 11.5Q2.5 9 4 5Z" fill="#4c8a3c"/><path d="M10 6Q12.5 5.5 13 8Q12.5 11.5 10.5 12Q10 9.5 9 8.5Q9 6.5 10 6Z" fill="#4c8a3c"/></svg><svg class="a" style="left:758.9px;top:221px;opacity:.78;" width="16" height="16" viewBox="0 0 16 16"><path d="M8 1.5L14 4.2V11.6L8 14.6L2 11.6V4.2Z" fill="#c8843c" stroke="#5a3208" stroke-width=".9" stroke-linejoin="round"/><path d="M8 1.5L14 4.2L8 7.2L2 4.2Z" fill="#f0c890"/><path d="M8 7.2V14.6L2 11.6V4.2Z" fill="#e09a48"/><path d="M2 4.2L8 7.2L14 4.2M8 7.2V14.6" fill="none" stroke="#5a3208" stroke-width=".7"/></svg><svg class="a" style="left:780.8px;top:221px;opacity:.78;" width="16" height="16" viewBox="0 0 16 16"><g fill="none" stroke="#333" stroke-width="3.2"><rect x="1.8" y="7" width="7" height="4.6" rx="2.3" transform="rotate(-35 5.3 9.3)"/><rect x="7.2" y="4.2" width="7" height="4.6" rx="2.3" transform="rotate(-35 10.7 6.5)"/></g><g fill="none" stroke="#c8c8c8" stroke-width="1.5"><rect x="1.8" y="7" width="7" height="4.6" rx="2.3" transform="rotate(-35 5.3 9.3)"/><rect x="7.2" y="4.2" width="7" height="4.6" rx="2.3" transform="rotate(-35 10.7 6.5)"/></g></svg><svg class="a" style="left:802.7px;top:221px;opacity:.78;" width="16" height="16" viewBox="0 0 16 16"><path d="M2.2 14L8.6 7.4" stroke="#1e3a6a" stroke-width="4" stroke-linecap="round"/><path d="M2.2 14L8.6 7.4" stroke="#6a9ad8" stroke-width="2.4" stroke-linecap="round"/><path d="M13.6 3.2L11.2 5.4L9.8 4.2L11.6 1.8C9.6 1.4 7.8 2.8 7.8 4.8C7.8 7 9.6 8.4 11.6 8C13.6 7.6 14.6 5.2 13.6 3.2Z" fill="#6a9ad8" stroke="#1e3a6a" stroke-width=".9"/></svg><svg class="a" style="left:824.6px;top:221px;opacity:.78;" width="16" height="16" viewBox="0 0 16 16"><path d="M2.5 3L13.5 3L8 13.5Z" fill="none" stroke="#222" stroke-width="1.1"/><g fill="#f0f0f0" stroke="#222" stroke-width=".7"><rect x="1.2" y="1.7" width="2.8" height="2.8"/><rect x="12" y="1.7" width="2.8" height="2.8"/><rect x="6.6" y="12" width="2.8" height="2.8"/></g></svg><svg class="a" style="left:846.5px;top:221px;" width="16" height="16" viewBox="0 0 16 16"><defs><radialGradient id="mg" cx=".35" cy=".3" r=".8"><stop offset="0" stop-color="#fff" stop-opacity=".95"/><stop offset=".45" stop-color="#fff" stop-opacity=".25"/><stop offset="1" stop-color="#000" stop-opacity=".35"/></radialGradient></defs><circle cx="8" cy="8" r="6.4" fill="#e4d0cc" stroke="#222" stroke-width="1"/><path d="M8 8L8 1.6A6.4 6.4 0 0 1 14.4 8Z" fill="#b85a48"/><path d="M8 8L8 14.4A6.4 6.4 0 0 1 1.6 8Z" fill="#b85a48"/><circle cx="8" cy="8" r="6.4" fill="url(#mg)"/></svg><svg class="a" style="left:868.4px;top:221px;opacity:.78;" width="16" height="16" viewBox="0 0 16 16"><rect x="1.5" y="1.5" width="13" height="13" fill="#d8d8d8" stroke="#555" stroke-width=".8"/><rect x="2.50" y="2.50" width="2.75" height="2.75" fill="#9c2a2a"/><rect x="2.50" y="5.25" width="2.75" height="2.75" fill="#dcd4d0"/><rect x="2.50" y="8.00" width="2.75" height="2.75" fill="#9c2a2a"/><rect x="2.50" y="10.75" width="2.75" height="2.75" fill="#dcd4d0"/><rect x="5.25" y="2.50" width="2.75" height="2.75" fill="#dcd4d0"/><rect x="5.25" y="5.25" width="2.75" height="2.75" fill="#9c2a2a"/><rect x="5.25" y="8.00" width="2.75" height="2.75" fill="#dcd4d0"/><rect x="5.25" y="10.75" width="2.75" height="2.75" fill="#9c2a2a"/><rect x="8.00" y="2.50" width="2.75" height="2.75" fill="#9c2a2a"/><rect x="8.00" y="5.25" width="2.75" height="2.75" fill="#dcd4d0"/><rect x="8.00" y="8.00" width="2.75" height="2.75" fill="#9c2a2a"/><rect x="8.00" y="10.75" width="2.75" height="2.75" fill="#dcd4d0"/><rect x="10.75" y="2.50" width="2.75" height="2.75" fill="#dcd4d0"/><rect x="10.75" y="5.25" width="2.75" height="2.75" fill="#9c2a2a"/><rect x="10.75" y="8.00" width="2.75" height="2.75" fill="#dcd4d0"/><rect x="10.75" y="10.75" width="2.75" height="2.75" fill="#9c2a2a"/></svg><svg class="a" style="left:890.3px;top:221px;opacity:.78;" width="16" height="16" viewBox="0 0 16 16"><circle cx="4.6" cy="4.2" r="2.09" fill="#e8d890" opacity=".35"/><path d="M0.7999999999999998 4.2Q4.14 3.74 4.6 0.40000000000000036Q5.06 3.74 8.399999999999999 4.2Q5.06 4.66 4.6 8.0Q4.14 4.66 0.7999999999999998 4.2Z" fill="#fffbe8" stroke="#cdb568" stroke-width=".45"/><circle cx="11.6" cy="5" r="2.20" fill="#e8d890" opacity=".35"/><path d="M7.6 5Q11.12 4.52 11.6 1Q12.08 4.52 15.6 5Q12.08 5.48 11.6 9Q11.12 5.48 7.6 5Z" fill="#fffbe8" stroke="#cdb568" stroke-width=".45"/><circle cx="5.6" cy="11.4" r="2.31" fill="#e8d890" opacity=".35"/><path d="M1.3999999999999995 11.4Q5.10 10.90 5.6 7.2Q6.10 10.90 9.8 11.4Q6.10 11.90 5.6 15.600000000000001Q5.10 11.90 1.3999999999999995 11.4Z" fill="#fffbe8" stroke="#cdb568" stroke-width=".45"/><circle cx="12" cy="12.2" r="1.65" fill="#e8d890" opacity=".35"/><path d="M9 12.2Q11.64 11.84 12 9.2Q12.36 11.84 15 12.2Q12.36 12.56 12 15.2Q11.64 12.56 9 12.2Z" fill="#fffbe8" stroke="#cdb568" stroke-width=".45"/></svg><svg class="a" style="left:912.2px;top:221px;opacity:.78;" width="16" height="16" viewBox="0 0 16 16"><path d="M2.5 6.5L6.5 13.5L11.5 5" fill="none" stroke="#2a4f8a" stroke-width="3.2"/><path d="M2.5 6.5L6.5 13.5L11.5 5" fill="none" stroke="#5a88c8" stroke-width="1.8"/><circle cx="11.8" cy="4" r="3" fill="#c8c8c8" stroke="#444" stroke-width=".7"/><circle cx="11" cy="3.2" r="1.2" fill="#fff"/></svg><svg class="a" style="left:650px;top:248px" width="26" height="24" viewBox="0 0 26 24"><g transform="translate(5.8 19.3) rotate(-46)" stroke="#1a1a1a" stroke-width="1" stroke-linejoin="round"><path d="M0 0L8.5 -.9V.9Z" fill="#d8d8d8"/><path d="M8 -5.2Q10 -2 13 -1.8V1.8Q10 2 8 5.2Z" fill="#e6e6e6"/><path d="M13 -3.9H16.2V3.9H13Z" fill="#f2f2f2"/></g></svg><svg class="a" style="left:676px;top:252px" width="18" height="18" viewBox="0 0 16 16"><circle cx="3.6" cy="3.4" r="2.4" fill="#dfe870" opacity=".8"/><circle cx="3.6" cy="3.4" r="1" fill="#fffbd0"/><path d="M8.5 3V11.5Q10.7 12.8 13 11.5V3Z" fill="#4478c8" stroke="#24468a" stroke-width=".6"/><path d="M9 3.4V11.6Q9.8 12 10.6 12V3.4Z" fill="#a8c8f0"/><ellipse cx="10.75" cy="3" rx="2.25" ry="1" fill="#cfe2fa"/><circle cx="6.6" cy="11.6" r="3.2" fill="#ddd" stroke="#1c1c1c" stroke-width=".9"/><circle cx="5.8" cy="10.6" r="1.5" fill="#fff"/></svg><div class="ar" style="left:699px;top:257px;border-left:4px solid #333;border-right:none"></div><svg class="a" style="left:717px;top:252px" width="17" height="17" viewBox="0 0 16 16"><path d="M8 1.5L14 4.2V11.6L8 14.6L2 11.6V4.2Z" fill="#e8923c" stroke="#5a3208" stroke-width=".9" stroke-linejoin="round"/><path d="M8 1.5L14 4.2L8 7.2L2 4.2Z" fill="#fbe6c8"/><path d="M8 7.2V14.6L2 11.6V4.2Z" fill="#f0a850"/><path d="M2 4.2L8 7.2L14 4.2M8 7.2V14.6" fill="none" stroke="#5a3208" stroke-width=".7"/></svg><div class="t " style="left:734px;top:255px;letter-spacing:-0.45px;">Cube</div><div class="ar" style="left:774px;top:257px;border-left:4px solid #333;border-right:none"></div><svg class="a" style="left:792px;top:252px" width="17" height="17" viewBox="0 0 16 16"><circle cx="8" cy="8" r="6.4" fill="#e4d0cc" stroke="#222" stroke-width="1"/><path d="M8 8L8 1.6A6.4 6.4 0 0 1 14.4 8Z" fill="#b85a48"/><path d="M8 8L8 14.4A6.4 6.4 0 0 1 1.6 8Z" fill="#b85a48"/><circle cx="8" cy="8" r="6.4" fill="url(#mg)"/></svg><div class="t " style="left:809px;top:255px;letter-spacing:-0.45px;">Material</div><div class="a" style="left:653px;top:286px;width:458px;height:53px;background:#7f7f7f;border:1px solid #2f2f2f;border-radius:5px"></div><div class="a" style="left:659px;top:295px;width:446px;height:18px;background:#5680c2;border-radius:2px"></div><svg class="a" style="left:662px;top:296px" width="16" height="16" viewBox="0 0 16 16"><rect x="0" y="0" width="4" height="4" fill="#111"/><rect x="0" y="4" width="4" height="4" fill="#7a7a7a"/><rect x="0" y="8" width="4" height="4" fill="#111"/><rect x="0" y="12" width="4" height="4" fill="#7a7a7a"/><rect x="4" y="0" width="4" height="4" fill="#7a7a7a"/><rect x="4" y="4" width="4" height="4" fill="#111"/><rect x="4" y="8" width="4" height="4" fill="#7a7a7a"/><rect x="4" y="12" width="4" height="4" fill="#111"/><rect x="8" y="0" width="4" height="4" fill="#111"/><rect x="8" y="4" width="4" height="4" fill="#7a7a7a"/><rect x="8" y="8" width="4" height="4" fill="#111"/><rect x="8" y="12" width="4" height="4" fill="#7a7a7a"/><rect x="12" y="0" width="4" height="4" fill="#7a7a7a"/><rect x="12" y="4" width="4" height="4" fill="#111"/><rect x="12" y="8" width="4" height="4" fill="#7a7a7a"/><rect x="12" y="12" width="4" height="4" fill="#111"/></svg><div class="t " style="left:679px;top:299px;letter-spacing:-0.45px;">Material</div><div class="btn" style="left:1119px;top:286px;width:20px;height:60px;border-radius:5px;border-color:#2b2b2b;overflow:hidden;background:linear-gradient(#a8a8a8 0,#8e8e8e 19px,#333 19px,#333 20px,#a8a8a8 20px,#8e8e8e 39px,#333 39px,#333 40px,#5a5a5a 40px,#3a3a3a 60px)"></div><svg class="a" style="left:1122px;top:289px" width="14" height="14" viewBox="0 0 14 14"><path d="M7 2V12M2 7H12" stroke="#222" stroke-width="3.6"/><path d="M7 2.6V11.4M2.6 7H11.4" stroke="#fff" stroke-width="1.8"/></svg><svg class="a" style="left:1122px;top:309px" width="14" height="14" viewBox="0 0 14 14"><path d="M2 7H12" stroke="#222" stroke-width="3.6"/><path d="M2.6 7H11.4" stroke="#fff" stroke-width="1.8"/></svg><svg class="a" style="left:1122px;top:329px" width="14" height="14" viewBox="0 0 14 14"><path d="M2 3H11L6.5 11Z" fill="#000"/><path d="M11.5 2.5L6.8 11.5" stroke="#999" stroke-width="1"/></svg><div class="btn dark" style="left:653px;top:351px;width:32px;height:20px;border-radius:5px 0 0 5px"></div><svg class="a" style="left:657px;top:353px" width="16" height="16" viewBox="0 0 16 16"><circle cx="8" cy="8" r="6.4" fill="#e4d0cc" stroke="#222" stroke-width="1"/><path d="M8 8L8 1.6A6.4 6.4 0 0 1 14.4 8Z" fill="#b85a48"/><path d="M8 8L8 14.4A6.4 6.4 0 0 1 1.6 8Z" fill="#b85a48"/><circle cx="8" cy="8" r="6.4" fill="url(#mg)"/></svg><div class="btn" style="left:684px;top:351px;width:219px;height:20px;border-radius:0;background:linear-gradient(#c6c6c6,#999);border-color:#2f2f2f"></div><div class="t " style="left:690px;top:356px;letter-spacing:-0.45px;">Material</div><div class="btn" style="left:902px;top:351px;width:21px;height:20px;border-radius:0;background:linear-gradient(#a0a0a0,#888);border-color:#2f2f2f"></div><div class="t " style="left:908px;top:356px;letter-spacing:-0.45px;">F</div><div class="btn" style="left:922px;top:351px;width:21px;height:20px;border-radius:0;background:linear-gradient(#a0a0a0,#888);border-color:#2f2f2f"></div><div class="btn" style="left:942px;top:351px;width:21px;height:20px;border-radius:0 5px 5px 0;background:linear-gradient(#a0a0a0,#888);border-color:#2f2f2f"></div><svg class="a" style="left:925.5px;top:354px" width="14" height="14" viewBox="0 0 14 14"><path d="M7 1.6V12.4M1.6 7H12.4" stroke="#222" stroke-width="3.8"/><path d="M7 2.4V11.6M2.4 7H11.6" stroke="#fff" stroke-width="1.8"/></svg><svg class="a" style="left:945px;top:354px" width="14" height="14" viewBox="0 0 14 14"><path d="M2.5 2.5L11.5 11.5M11.5 2.5L2.5 11.5" stroke="#222" stroke-width="3.8"/><path d="M3 3L11 11M11 3L3 11" stroke="#fff" stroke-width="1.8"/></svg><div class="btn" style="left:971px;top:351px;width:20px;height:20px;border-radius:5px;background:linear-gradient(#9a9a9a,#848484);border-color:#2f2f2f"></div><svg class="a" style="left:973px;top:353px" width="16" height="16" viewBox="0 0 16 16"><path d="M10 4.5Q14.5 4.5 14.5 8.5Q14.5 12 10 12" fill="none" stroke="#9ab8e8" stroke-width="1.4"/><rect x="2.5" y="1.5" width="7" height="5.4" fill="#f4f4f4" stroke="#222" stroke-width=".9"/><rect x="1" y="9" width="7" height="5.4" fill="#f4f4f4" stroke="#222" stroke-width=".9"/><rect x="3.5" y="2.6" width="5" height="1.3" fill="#999"/><rect x="2" y="10.1" width="5" height="1.3" fill="#999"/><rect x="9" y="3.6" width="2" height="2" fill="#f0a030"/><rect x="7.6" y="11" width="2" height="2" fill="#f0a030"/></svg><div class="btn dark" style="left:999px;top:351px;width:140px;height:20px;border-radius:5px"></div><div class="t w" style="left:1004px;top:356px;letter-spacing:-0.45px;">Data</div><svg class="a" style="left:1125px;top:354px" width="8" height="14" viewBox="0 0 8 14"><path d="M4 1L7.2 6H.8ZM4 13L.8 8H7.2Z" fill="#b8b8b8"/></svg><div class="btn dark" style="left:653px;top:376px;width:486px;height:20px;border-radius:5px;overflow:hidden"><div class="a" style="left:361px;top:0;width:124px;height:18px;background:linear-gradient(#4a76c2,#6a93d6)"></div><div class="a" style="left:119.5px;top:0;width:1px;height:18px;background:#222"></div><div class="a" style="left:240.5px;top:0;width:1px;height:18px;background:#222"></div><div class="a" style="left:361px;top:0;width:1px;height:18px;background:#222"></div></div><div class="t w" style="left:653px;top:381px;width:120px;text-align:center;letter-spacing:-0.45px;">Surface</div><div class="t w" style="left:774px;top:381px;width:120px;text-align:center;letter-spacing:-0.45px;">Wire</div><div class="t w" style="left:895px;top:381px;width:120px;text-align:center;letter-spacing:-0.45px;">Volume</div><div class="t " style="left:1017px;top:381px;width:120px;text-align:center;letter-spacing:-0.45px;">Halo</div><div class="sep" style="top:407px"></div><div class="sep2" style="top:408px;opacity:.5"></div><svg class="a" style="left:655px;top:414px" width="11" height="10" viewBox="0 0 11 10"><path d="M.5 .5H10.5L5.5 9.5Z" fill="#222"/></svg><div class="t " style="left:670px;top:414px;font-size:12px;letter-spacing:-0.45px;">Preview</div><svg class="a" style="left:1124px;top:409px" width="18" height="18" viewBox="0 0 18 18"><g stroke-width="1"><path d="M1 1L17 17M7 1L17 11M13 1L17 5" stroke="#5a5a5a"/><path d="M2 1L18 17M8 1L18 11M14 1L18 5" stroke="#8c8c8c"/></g></svg><div class="sep" style="top:567px"></div><div class="sep2" style="top:568px;opacity:.5"></div><svg class="a" style="left:655px;top:574px" width="11" height="10" viewBox="0 0 11 10"><path d="M.5 .5H10.5L5.5 9.5Z" fill="#222"/></svg><div class="t " style="left:670px;top:574px;font-size:12px;letter-spacing:-0.45px;">Halo</div><svg class="a" style="left:1124px;top:569px" width="18" height="18" viewBox="0 0 18 18"><g stroke-width="1"><path d="M1 1L17 17M7 1L17 11M13 1L17 5" stroke="#5a5a5a"/><path d="M2 1L18 17M8 1L18 11M14 1L18 5" stroke="#8c8c8c"/></g></svg><div class="sep" style="top:808px"></div><div class="sep2" style="top:809px;opacity:.5"></div><svg class="a" style="left:655px;top:815px" width="11" height="10" viewBox="0 0 11 10"><path d="M.5 .5H10.5L5.5 9.5Z" fill="#222"/></svg><div class="t " style="left:690px;top:816px;font-size:12px;letter-spacing:-0.45px;">Flare</div><svg class="a" style="left:1124px;top:810px" width="18" height="18" viewBox="0 0 18 18"><g stroke-width="1"><path d="M1 1L17 17M7 1L17 11M13 1L17 5" stroke="#5a5a5a"/><path d="M2 1L18 17M8 1L18 11M14 1L18 5" stroke="#8c8c8c"/></g></svg><div class="cb" style="left:670px;top:813px"></div><div class="sep" style="top:913px"></div><div class="sep2" style="top:914px;opacity:.5"></div><svg class="a" style="left:655px;top:919px" width="10" height="11" viewBox="0 0 10 11"><path d="M.5 .5V10.5L9.5 5.5Z" fill="#222"/></svg><div class="t " style="left:670px;top:920px;font-size:12px;letter-spacing:-0.45px;">Strand</div><svg class="a" style="left:1124px;top:915px" width="18" height="18" viewBox="0 0 18 18"><g stroke-width="1"><path d="M1 1L17 17M7 1L17 11M13 1L17 5" stroke="#5a5a5a"/><path d="M2 1L18 17M8 1L18 11M14 1L18 5" stroke="#8c8c8c"/></g></svg><div class="sep" style="top:937px"></div><div class="sep2" style="top:938px;opacity:.5"></div><svg class="a" style="left:655px;top:943px" width="10" height="11" viewBox="0 0 10 11"><path d="M.5 .5V10.5L9.5 5.5Z" fill="#222"/></svg><div class="t " style="left:670px;top:944px;font-size:12px;letter-spacing:-0.45px;">Custom Properties</div><svg class="a" style="left:1124px;top:939px" width="18" height="18" viewBox="0 0 18 18"><g stroke-width="1"><path d="M1 1L17 17M7 1L17 11M13 1L17 5" stroke="#5a5a5a"/><path d="M2 1L18 17M8 1L18 11M14 1L18 5" stroke="#8c8c8c"/></g></svg><div class="num" style="left:653px;top:596px;width:239px;background:linear-gradient(#7b7b7b,#8b8b8b)">Alpha: 1.000</div><div class="a" style="left:653px;top:618px;width:239px;height:20px;background:#e7e7e7;border:1px solid #2f2f2f;border-radius:5px"></div><div class="num" style="left:653px;top:640px;width:239px;">Seed: 0</div><div class="ar" style="left:659px;top:647px;border-right:4px solid #6c6c6c;border-left:none"></div><div class="ar" style="left:882px;top:647px;border-left:4px solid #6c6c6c;border-right:none"></div><div class="num" style="left:900px;top:596px;width:239px;">Size: 0.500</div><div class="ar" style="left:906px;top:603px;border-right:4px solid #6c6c6c;border-left:none"></div><div class="ar" style="left:1129px;top:603px;border-left:4px solid #6c6c6c;border-right:none"></div><div class="num" style="left:900px;top:618px;width:239px;">Hardness: 50</div><div class="ar" style="left:906px;top:625px;border-right:4px solid #6c6c6c;border-left:none"></div><div class="ar" style="left:1129px;top:625px;border-left:4px solid #6c6c6c;border-right:none"></div><div class="num" style="left:900px;top:640px;width:239px;background:linear-gradient(90deg,#868686 0,#868686 8px,rgba(0,0,0,0) 8px),linear-gradient(#9f9f9f,#b6b6b6)">Add: 0.000</div><div class="t " style="left:659px;top:670px;letter-spacing:-0.45px;">Options:</div><div class="cb" style="left:656px;top:693px"></div><div class="t " style="left:675px;top:695px;letter-spacing:-0.45px;">Texture</div><div class="cb" style="left:656px;top:715px"></div><div class="t " style="left:675px;top:717px;letter-spacing:-0.45px;">Vertex Normal</div><div class="cb" style="left:656px;top:737px"></div><div class="t " style="left:675px;top:739px;letter-spacing:-0.45px;">Extreme Alpha</div><div class="cb" style="left:656px;top:759px"></div><div class="t " style="left:675px;top:761px;letter-spacing:-0.45px;">Shaded</div><div class="cb" style="left:656px;top:781px"></div><div class="t " style="left:675px;top:783px;letter-spacing:-0.45px;">Soft</div><div class="cb" style="left:903px;top:693px"></div><div class="cb" style="left:903px;top:737px"></div><div class="cb" style="left:903px;top:781px"></div><div class="num dis" style="left:920px;top:690px;width:219px;border-radius:10px 10px 0 0;height:21px">Rings: 4</div><div class="ar" style="left:926px;top:697px;border-right:4px solid #767676;border-left:none"></div><div class="ar" style="left:1129px;top:697px;border-left:4px solid #767676;border-right:none"></div><div class="a" style="left:920px;top:710px;width:219px;height:22px;background:#b9b9b9;border:1px solid #4a4a4a;border-radius:0 0 5px 5px"></div><div class="num dis" style="left:920px;top:734px;width:219px;border-radius:10px 10px 0 0;height:21px">Lines: 12</div><div class="ar" style="left:926px;top:741px;border-right:4px solid #767676;border-left:none"></div><div class="ar" style="left:1129px;top:741px;border-left:4px solid #767676;border-right:none"></div><div class="a" style="left:920px;top:754px;width:219px;height:22px;background:#b9b9b9;border:1px solid #4a4a4a;border-radius:0 0 5px 5px"></div><div class="num dis" style="left:920px;top:778px;width:219px;">Star tips: 4</div><div class="ar" style="left:926px;top:785px;border-right:4px solid #767676;border-left:none"></div><div class="ar" style="left:1129px;top:785px;border-left:4px solid #767676;border-right:none"></div><div class="num dis" style="left:653px;top:838px;width:239px;">Size: 1.000</div><div class="ar" style="left:659px;top:845px;border-right:4px solid #767676;border-left:none"></div><div class="ar" style="left:882px;top:845px;border-left:4px solid #767676;border-right:none"></div><div class="num dis" style="left:653px;top:860px;width:239px;">Boost: 1.000</div><div class="ar" style="left:659px;top:867px;border-right:4px solid #767676;border-left:none"></div><div class="ar" style="left:882px;top:867px;border-left:4px solid #767676;border-right:none"></div><div class="num dis" style="left:653px;top:882px;width:239px;">Seed: 6</div><div class="ar" style="left:659px;top:889px;border-right:4px solid #767676;border-left:none"></div><div class="ar" style="left:882px;top:889px;border-left:4px solid #767676;border-right:none"></div><div class="num dis" style="left:900px;top:838px;width:239px;">Subflares: 1</div><div class="ar" style="left:906px;top:845px;border-right:4px solid #767676;border-left:none"></div><div class="ar" style="left:1129px;top:845px;border-left:4px solid #767676;border-right:none"></div><div class="num dis" style="left:900px;top:860px;width:239px;">Subsize: 1.000</div><div class="ar" style="left:906px;top:867px;border-right:4px solid #767676;border-left:none"></div><div class="ar" style="left:1129px;top:867px;border-left:4px solid #767676;border-right:none"></div><div class="a" style="left:653px;top:436px;width:448px;height:120px;border:1px solid #2f2f2f;border-radius:5px;overflow:hidden;background:#2a2a2a" id="pv"><svg class="a" style="left:0;top:0" width="446" height="118" viewBox="654 437 446 118"><defs><linearGradient id="wl" x1="0" x2="1" y1="0" y2="0"><stop offset="0" stop-color="#909090"/><stop offset="1" stop-color="#969696"/></linearGradient><linearGradient id="wr" x1="0" x2="1" y1="0" y2="1"><stop offset="0" stop-color="#a2a2a2"/><stop offset="1" stop-color="#8c8c8c"/></linearGradient><radialGradient id="sg" cx="877.5" cy="495" r="59" gradientUnits="userSpaceOnUse"><stop offset="0" stop-color="#c4c4c4"/><stop offset=".6" stop-color="#cacaca"/><stop offset=".8" stop-color="#d8d8d8"/><stop offset=".9" stop-color="#dedede" stop-opacity=".97"/><stop offset=".95" stop-color="#d4d4d4" stop-opacity=".6"/><stop offset="1" stop-color="#c8c8c8" stop-opacity="0"/></radialGradient><radialGradient id="sm" cx="877.5" cy="495" r="54" gradientUnits="userSpaceOnUse"><stop offset="0" stop-color="#fff"/><stop offset=".55" stop-color="#eee"/><stop offset=".8" stop-color="#555"/><stop offset=".95" stop-color="#000"/></radialGradient><radialGradient id="sm2" cx="877.5" cy="495" r="56" gradientUnits="userSpaceOnUse"><stop offset="0" stop-color="#fff"/><stop offset=".85" stop-color="#fff"/><stop offset="1" stop-color="#000"/></radialGradient><mask id="mk2" maskUnits="userSpaceOnUse" x="815" y="435" width="125" height="122"><circle cx="877.5" cy="495" r="56" fill="url(#sm2)"/></mask><mask id="mk" maskUnits="userSpaceOnUse" x="815" y="435" width="125" height="122"><circle cx="877.5" cy="495" r="54" fill="url(#sm)"/></mask><pattern id="dots" width="3.3" height="3.3" patternUnits="userSpaceOnUse" patternTransform="rotate(12 877 495)"><circle cx="1.6" cy="1.6" r=".8" fill="#fff"/></pattern><clipPath id="cl"><circle cx="877.5" cy="495" r="55"/></clipPath></defs><rect x="654" y="437" width="446" height="118" fill="#2b2b2b"/><path d="M878.0 507.8L867.3 509.2L867.3 494.0L878.0 494.0ZM878.0 480.2L867.3 478.8L867.3 463.7L878.0 466.3ZM878.0 452.5L867.3 448.5L867.3 433.4L878.0 438.7ZM878.0 424.8L867.3 418.2L867.3 403.1L878.0 411.0ZM867.3 524.3L854.3 527.5L854.3 510.8L867.3 509.2ZM867.3 494.0L854.3 494.0L854.3 477.2L867.3 478.8ZM867.3 463.7L854.3 460.5L854.3 443.7L867.3 448.5ZM867.3 433.4L854.3 427.0L854.3 410.2L867.3 418.2ZM854.3 510.8L838.3 512.7L838.3 494.0L854.3 494.0ZM854.3 477.2L838.3 475.3L838.3 456.5L854.3 460.5ZM854.3 443.7L838.3 437.8L838.3 419.0L854.3 427.0ZM854.3 410.2L838.3 400.3L838.3 381.6L854.3 393.5ZM838.3 531.5L817.9 536.5L817.9 515.3L838.3 512.7ZM838.3 494.0L817.9 494.0L817.9 472.7L838.3 475.3ZM838.3 456.5L817.9 451.5L817.9 430.2L838.3 437.8ZM838.3 419.0L817.9 409.0L817.9 387.7L838.3 400.3ZM817.9 515.3L791.2 518.5L791.2 494.0L817.9 494.0ZM817.9 472.7L791.2 469.5L791.2 444.9L817.9 451.5ZM817.9 430.2L791.2 420.4L791.2 395.8L817.9 409.0ZM817.9 387.7L791.2 371.3L791.2 346.7L817.9 366.5ZM791.2 543.1L754.8 552.1L754.8 523.0L791.2 518.5ZM791.2 494.0L754.8 494.0L754.8 465.0L791.2 469.5ZM791.2 444.9L754.8 435.9L754.8 406.9L791.2 420.4ZM791.2 395.8L754.8 377.8L754.8 348.8L791.2 371.3ZM754.8 523.0L702.0 529.6L702.0 494.0L754.8 494.0ZM754.8 465.0L702.0 458.4L702.0 422.9L754.8 435.9ZM754.8 406.9L702.0 387.3L702.0 351.7L754.8 377.8ZM754.8 348.8L702.0 316.2L702.0 280.6L754.8 319.7ZM702.0 565.1L618.6 585.7L618.6 539.9L702.0 529.6ZM702.0 494.0L618.6 494.0L618.6 448.1L702.0 458.4ZM702.0 422.9L618.6 402.3L618.6 356.4L702.0 387.3ZM702.0 351.7L618.6 310.6L618.6 264.7L702.0 316.2ZM618.6 539.9L600.0 542.2L600.0 494.0L618.6 494.0ZM618.6 448.1L600.0 445.8L600.0 397.7L618.6 402.3ZM618.6 356.4L600.0 349.5L600.0 301.3L618.6 310.6ZM618.6 264.7L600.0 253.2L600.0 205.0L618.6 218.8Z" fill="#929292"/><path d="M878.0 521.7L888.7 524.3L888.7 509.2L878.0 507.8ZM878.0 494.0L888.7 494.0L888.7 478.8L878.0 480.2ZM878.0 466.3L888.7 463.7L888.7 448.5L878.0 452.5ZM878.0 438.7L888.7 433.4L888.7 418.2L878.0 424.8ZM888.7 509.2L901.7 510.8L901.7 494.0L888.7 494.0ZM888.7 478.8L901.7 477.2L901.7 460.5L888.7 463.7ZM888.7 448.5L901.7 443.7L901.7 427.0L888.7 433.4ZM888.7 418.2L901.7 410.2L901.7 393.5L888.7 403.1ZM901.7 527.5L917.7 531.5L917.7 512.7L901.7 510.8ZM901.7 494.0L917.7 494.0L917.7 475.3L901.7 477.2ZM901.7 460.5L917.7 456.5L917.7 437.8L901.7 443.7ZM901.7 427.0L917.7 419.0L917.7 400.3L901.7 410.2ZM917.7 512.7L938.1 515.3L938.1 494.0L917.7 494.0ZM917.7 475.3L938.1 472.7L938.1 451.5L917.7 456.5ZM917.7 437.8L938.1 430.2L938.1 409.0L917.7 419.0ZM917.7 400.3L938.1 387.7L938.1 366.5L917.7 381.6ZM938.1 536.5L964.8 543.1L964.8 518.5L938.1 515.3ZM938.1 494.0L964.8 494.0L964.8 469.5L938.1 472.7ZM938.1 451.5L964.8 444.9L964.8 420.4L938.1 430.2ZM938.1 409.0L964.8 395.8L964.8 371.3L938.1 387.7ZM964.8 518.5L1001.2 523.0L1001.2 494.0L964.8 494.0ZM964.8 469.5L1001.2 465.0L1001.2 435.9L964.8 444.9ZM964.8 420.4L1001.2 406.9L1001.2 377.8L964.8 395.8ZM964.8 371.3L1001.2 348.8L1001.2 319.7L964.8 346.7ZM1001.2 552.1L1054.0 565.1L1054.0 529.6L1001.2 523.0ZM1001.2 494.0L1054.0 494.0L1054.0 458.4L1001.2 465.0ZM1001.2 435.9L1054.0 422.9L1054.0 387.3L1001.2 406.9ZM1001.2 377.8L1054.0 351.7L1054.0 316.2L1001.2 348.8ZM1054.0 529.6L1137.4 539.9L1137.4 494.0L1054.0 494.0ZM1054.0 458.4L1137.4 448.1L1137.4 402.3L1054.0 422.9ZM1054.0 387.3L1137.4 356.4L1137.4 310.6L1054.0 351.7ZM1054.0 316.2L1137.4 264.7L1137.4 218.8L1054.0 280.6ZM1137.4 585.7L1160.0 591.3L1160.0 542.7L1137.4 539.9ZM1137.4 494.0L1160.0 494.0L1160.0 445.3L1137.4 448.1ZM1137.4 402.3L1160.0 396.7L1160.0 348.0L1137.4 356.4ZM1137.4 310.6L1160.0 299.4L1160.0 250.7L1137.4 264.7Z" fill="url(#wr)"/><path d="M600 590.3L878 521.7L1160 591.3L1160 560L600 560Z" fill="#2b2b2b"/><path d="M915.0 530.5L937.9 537.2L930.3 543.6L912.0 537.9ZM841.0 530.5L818.1 537.2L825.7 543.6L844.0 537.9ZM931.0 544.0L968.5 555.5L916.5 555.5ZM825.0 544.0L787.5 555.5L839.5 555.5ZM896.0 547.6L918.4 552.8L916.4 555.5L896.0 555.5ZM860.0 547.6L837.6 552.8L839.6 555.5L860.0 555.5ZM1001.2 552.3L1009.6 555.5L1001.2 555.5ZM746.4 555.5L754.8 552.3L754.8 555.5ZM852 545L904 545L917 555.5L839 555.5ZM837.8 552.6L856.5 546.4L899.5 546.4L918.2 552.6L916.5 555.5L839.5 555.5Z" fill="#a2a2a2"/><path d="M874.5 555.5L878 552.8L881.5 555.5Z" fill="#2b2b2b"/><circle cx="877.5" cy="495" r="59" fill="url(#sg)"/><filter id="bl" x="-5%" y="-5%" width="110%" height="110%"><feGaussianBlur stdDeviation="1"/></filter><g fill="#e2e2e2" opacity=".85" filter="url(#bl)"><circle cx="930.7" cy="495.0" r="3.4"/><circle cx="930.2" cy="502.4" r="3.4"/><circle cx="928.6" cy="509.7" r="3.4"/><circle cx="926.1" cy="516.6" r="3.4"/><circle cx="922.6" cy="523.2" r="3.4"/><circle cx="918.3" cy="529.2" r="3.4"/><circle cx="913.1" cy="534.5" r="3.4"/><circle cx="907.2" cy="539.1" r="3.4"/><circle cx="900.8" cy="542.8" r="3.4"/><circle cx="893.9" cy="545.6" r="3.4"/><circle cx="886.7" cy="547.4" r="3.4"/><circle cx="879.4" cy="548.2" r="3.4"/><circle cx="871.9" cy="547.9" r="3.4"/><circle cx="864.6" cy="546.6" r="3.4"/><circle cx="857.6" cy="544.3" r="3.4"/><circle cx="850.9" cy="541.1" r="3.4"/><circle cx="844.7" cy="536.9" r="3.4"/><circle cx="839.2" cy="532.0" r="3.4"/><circle cx="834.5" cy="526.3" r="3.4"/><circle cx="830.5" cy="520.0" r="3.4"/><circle cx="827.5" cy="513.2" r="3.4"/><circle cx="825.5" cy="506.1" r="3.4"/><circle cx="824.4" cy="498.7" r="3.4"/><circle cx="824.4" cy="491.3" r="3.4"/><circle cx="825.5" cy="483.9" r="3.4"/><circle cx="827.5" cy="476.8" r="3.4"/><circle cx="830.5" cy="470.0" r="3.4"/><circle cx="834.5" cy="463.7" r="3.4"/><circle cx="839.2" cy="458.0" r="3.4"/><circle cx="844.7" cy="453.1" r="3.4"/><circle cx="850.9" cy="448.9" r="3.4"/><circle cx="857.6" cy="445.7" r="3.4"/><circle cx="864.6" cy="443.4" r="3.4"/><circle cx="871.9" cy="442.1" r="3.4"/><circle cx="879.4" cy="441.8" r="3.4"/><circle cx="886.7" cy="442.6" r="3.4"/><circle cx="893.9" cy="444.4" r="3.4"/><circle cx="900.8" cy="447.2" r="3.4"/><circle cx="907.2" cy="450.9" r="3.4"/><circle cx="913.1" cy="455.5" r="3.4"/><circle cx="918.3" cy="460.8" r="3.4"/><circle cx="922.6" cy="466.8" r="3.4"/><circle cx="926.1" cy="473.4" r="3.4"/><circle cx="928.6" cy="480.3" r="3.4"/><circle cx="930.2" cy="487.6" r="3.4"/></g><g mask="url(#mk)"><path d="M822 440H838V452H822ZM822 464H838V478.5H822ZM822 494.5H838V510H822ZM822 526H838V540H822ZM838 452H853.5V464H838ZM838 478.5H853.5V494.5H838ZM838 510H853.5V526H838ZM838 540H853.5V552H838ZM853.5 440H866.5V452H853.5ZM853.5 464H866.5V478.5H853.5ZM853.5 494.5H866.5V510H853.5ZM853.5 526H866.5V540H853.5ZM866.5 452H877.5V464H866.5ZM866.5 478.5H877.5V494.5H866.5ZM866.5 510H877.5V526H866.5ZM866.5 540H877.5V552H866.5ZM877.5 440H888V452H877.5ZM877.5 464H888V478.5H877.5ZM877.5 494.5H888V510H877.5ZM877.5 526H888V540H877.5ZM888 452H900.5V464H888ZM888 478.5H900.5V494.5H888ZM888 510H900.5V526H888ZM888 540H900.5V552H888ZM900.5 440H917V452H900.5ZM900.5 464H917V478.5H900.5ZM900.5 494.5H917V510H900.5ZM900.5 526H917V540H900.5ZM917 452H933V464H917ZM917 478.5H933V494.5H917ZM917 510H933V526H917ZM917 540H933V552H917Z" fill="#606060" opacity=".42"/></g><g mask="url(#mk2)"><circle cx="877.5" cy="495" r="56" fill="url(#dots)" opacity=".6"/></g></svg></div><div class="btn dark" style="left:1109px;top:436px;width:30px;height:120px;border-radius:5px;overflow:hidden"><div class="a" style="left:0;top:18.5px;width:28px;height:19.5px;background:linear-gradient(#4a76c2,#6a93d6)"></div><div class="a" style="left:0;top:18.7px;width:28px;height:1px;background:#222"></div><div class="a" style="left:0;top:38.4px;width:28px;height:1px;background:#222"></div><div class="a" style="left:0;top:58.1px;width:28px;height:1px;background:#222"></div><div class="a" style="left:0;top:77.8px;width:28px;height:1px;background:#222"></div><div class="a" style="left:0;top:97.5px;width:28px;height:1px;background:#222"></div></div><svg class="a" style="left:1116px;top:438.0px" width="16" height="16" viewBox="0 0 16 16"><rect x="2" y="2" width="12" height="12" fill="#8a8a8a" stroke="#ddd" stroke-width="1"/><rect x="3" y="3" width="10" height="10" fill="url(#pg0)"/><defs><linearGradient id="pg0" x1="0" y1="0" x2="1" y2="1"><stop offset="0" stop-color="#aaa"/><stop offset="1" stop-color="#777"/></linearGradient></defs></svg><svg class="a" style="left:1116px;top:457.8px" width="16" height="16" viewBox="0 0 16 16"><defs><radialGradient id="pg1" cx=".4" cy=".35" r=".7"><stop offset="0" stop-color="#fff"/><stop offset=".5" stop-color="#ddd"/><stop offset="1" stop-color="#777"/></radialGradient></defs><circle cx="8" cy="8" r="6.3" fill="url(#pg1)" stroke="#222" stroke-width="1"/></svg><svg class="a" style="left:1116px;top:477.6px" width="16" height="16" viewBox="0 0 16 16"><path d="M8 1.5L14 4.2V11.6L8 14.6L2 11.6V4.2Z" fill="#8a8a8a" stroke="#444" stroke-width=".8"/><path d="M8 1.5L14 4.2L8 7.2L2 4.2Z" fill="#c4c4c4"/><path d="M8 7.2V14.6L2 11.6V4.2Z" fill="#a0a0a0"/></svg><svg class="a" style="left:1116px;top:497.4px" width="16" height="16" viewBox="0 0 16 16"><path d="M8 2C5 2 4 4 4 5.5C2 5 1 6 1.5 7.5C2 9 3.5 9 4.5 8.5C5 10.5 6 11 6.5 13H9.5C10 11 11 10.5 11.5 8.5C12.5 9 14 9 14.5 7.5C15 6 14 5 12 5.5C12 4 11 2 8 2Z" fill="#c0c0c0" stroke="#444" stroke-width=".7"/><circle cx="6.2" cy="6.2" r="1" fill="#555"/><circle cx="9.8" cy="6.2" r="1" fill="#555"/><rect x="7" y="13" width="2" height="1.6" fill="#aaa"/></svg><svg class="a" style="left:1116px;top:517.2px" width="16" height="16" viewBox="0 0 16 16"><g fill="none" stroke="#c8c8c8" stroke-width="1.4" stroke-linecap="round"><path d="M3 14Q3 6 6.5 2"/><path d="M7 14Q7 8 11 5"/><path d="M11 14Q11.5 10.5 14 9"/></g></svg><svg class="a" style="left:1116px;top:537.0px" width="16" height="16" viewBox="0 0 16 16"><circle cx="4" cy="3.6" r="2.6" fill="#c8c868" opacity=".55"/><circle cx="4" cy="3.6" r="1" fill="#e8e8a0"/><path d="M8 6Q7.6 3.8 9.8 3.8Q10.4 2 12.2 2.6Q14.4 2.6 14.2 4.8Q15.4 6 13.6 7H9.2Q8 7 8 6Z" fill="#6f839c"/><circle cx="6.6" cy="11" r="4.6" fill="#a8a8a8" stroke="#2e2e2e" stroke-width=".8"/><circle cx="5.4" cy="9.6" r="2" fill="#d8d8d8"/></svg><svg class="a" style="left:0;top:0" width="1172" height="1040" viewBox="0 0 1172 1040" id="curve"><g fill="none" stroke="#fff" stroke-width="2.2" stroke-linecap="round" stroke-linejoin="round"><path d="M395.0 268.6C398.4 269.6 408.9 272.3 415.5 274.6C422.1 276.9 426.9 279.2 434.6 282.2C442.3 285.1 452.8 289.2 461.9 292.3C471.0 295.4 480.1 297.3 489.2 300.5C498.3 303.7 507.4 307.9 516.5 311.4C525.6 314.9 536.0 318.8 543.8 321.5C551.5 324.2 556.6 325.8 563.0 327.8C569.4 329.8 575.2 330.8 582.0 333.3C588.8 335.8 597.5 339.6 603.9 342.8C610.3 346.0 614.8 349.2 620.3 352.4C625.8 355.6 631.2 359.2 636.7 361.9C642.2 364.6 646.6 366.3 653.0 368.8C659.4 371.3 667.7 374.1 674.9 377.0C682.1 379.9 689.6 383.5 696.4 385.9C703.2 388.3 709.1 389.9 715.5 391.4C721.9 392.9 728.2 394.2 734.6 394.9C741.0 395.6 748.2 394.9 753.7 395.5C759.2 396.1 762.9 397.1 767.4 398.2C771.9 399.3 776.5 401.2 781.0 402.3C785.5 403.4 788.8 404.0 794.7 404.5C800.6 405.0 808.3 405.2 816.5 405.3C824.7 405.4 830.1 405.3 843.8 405.3C857.4 405.3 880.7 405.2 898.4 405.3C916.1 405.4 938.2 405.7 950.0 405.6C961.8 405.5 961.3 404.7 968.9 404.5C976.5 404.3 991.1 404.5 995.5 404.5"/><path d="M1059.9 381.4C1061.2 380.8 1064.8 378.8 1068.0 377.8C1071.2 376.8 1074.5 375.9 1078.8 375.2C1083.1 374.5 1087.7 373.5 1094.0 373.6C1100.3 373.8 1110.4 374.9 1116.7 376.1C1123.0 377.3 1126.9 378.4 1131.9 380.8C1137.0 383.2 1143.2 387.1 1147.0 390.3C1150.8 393.5 1153.2 396.6 1154.6 399.8C1156.0 403.0 1156.1 406.6 1155.5 409.3C1154.9 412.0 1153.5 414.0 1150.8 415.9C1148.1 417.8 1144.5 419.5 1139.4 420.6C1134.4 421.7 1130.0 422.2 1120.5 422.5C1111.0 422.8 1095.2 422.6 1082.6 422.5C1070.0 422.4 1054.2 422.4 1044.7 421.6C1035.2 420.8 1032.1 419.4 1025.8 417.8C1019.5 416.2 1012.5 414.2 1006.8 412.1C1001.1 410.1 996.1 407.7 991.7 405.5C987.3 403.3 983.6 401.2 980.3 398.8C977.0 396.4 973.5 393.7 971.8 391.3C970.1 388.9 969.4 386.7 969.9 384.6C970.4 382.5 971.6 380.5 974.6 378.9C977.6 377.3 982.5 375.8 987.9 374.8C993.3 373.8 997.3 373.3 1006.8 372.9C1016.3 372.5 1032.1 372.3 1044.7 372.3C1057.3 372.3 1074.4 372.6 1082.6 372.9C1090.8 373.2 1092.1 374.0 1094.0 374.2"/></g></svg></div></body></html>
